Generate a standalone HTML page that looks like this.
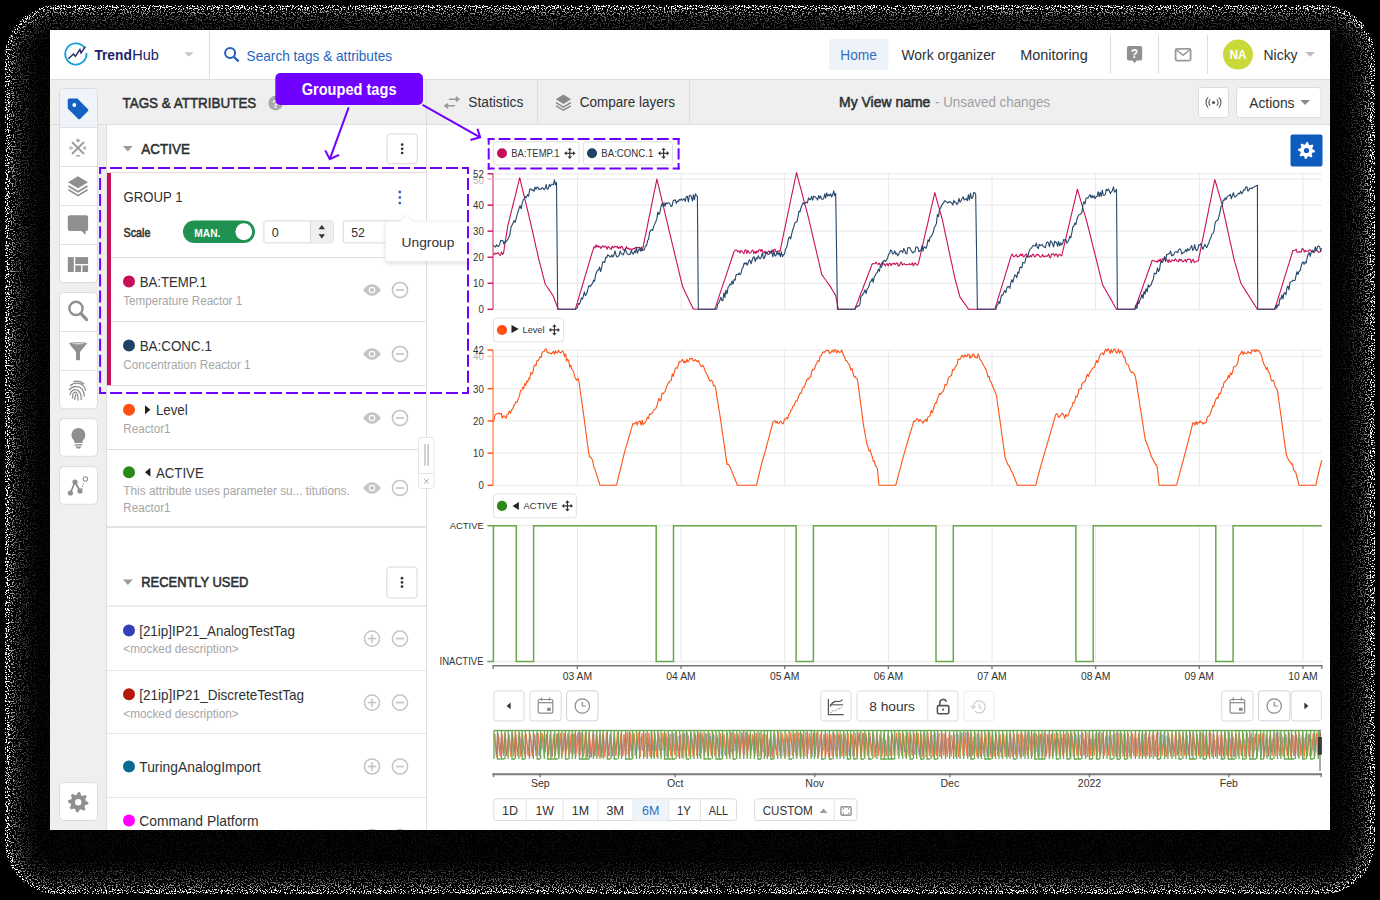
<!DOCTYPE html>
<html><head><meta charset="utf-8"><title>TrendHub</title>
<style>
html,body{margin:0;padding:0;background:#000;width:1380px;height:900px;overflow:hidden}
svg{display:block;font-family:"Liberation Sans", sans-serif}
</style></head><body>
<svg width="1380" height="900" viewBox="0 0 1380 900">
<defs>
<filter id="d30" x="0" y="0" width="1380" height="900" filterUnits="userSpaceOnUse">
 <feTurbulence type="fractalNoise" baseFrequency="0.73" numOctaves="2" seed="5" result="t"/>
 <feColorMatrix in="t" type="matrix" values="0 0 0 0 1  0 0 0 0 1  0 0 0 0 1  20 0 0 0 -11.1" result="dots"/>
 <feComposite in="SourceGraphic" in2="dots" operator="in"/>
</filter>
<filter id="d50" x="0" y="0" width="1380" height="900" filterUnits="userSpaceOnUse">
 <feTurbulence type="fractalNoise" baseFrequency="0.81" numOctaves="2" seed="17" result="t"/>
 <feColorMatrix in="t" type="matrix" values="0 0 0 0 1  0 0 0 0 1  0 0 0 0 1  20 0 0 0 -10.9" result="dots"/>
 <feComposite in="SourceGraphic" in2="dots" operator="in"/>
</filter>
<clipPath id="frameclip"><rect x="50" y="30" width="1280" height="800"/></clipPath>
<clipPath id="cl"><rect x="5" y="5" width="1370" height="889" rx="52"/></clipPath>
</defs>
<g clip-path="url(#cl)"><g filter="url(#d30)"><rect x="5" y="5" width="1370" height="889" rx="52" fill="rgb(14,14,14)"/><rect x="33" y="33" width="1314" height="833" rx="24" fill="none" stroke="rgb(30,30,30)" stroke-width="8"/><rect x="25" y="25" width="1330" height="849" rx="32" fill="none" stroke="rgb(52,52,52)" stroke-width="8"/><rect x="18" y="18" width="1344" height="863" rx="39" fill="none" stroke="rgb(85,85,85)" stroke-width="6"/><rect x="12.5" y="12.5" width="1355.0" height="874.0" rx="44.5" fill="none" stroke="rgb(150,150,150)" stroke-width="5"/></g>
<g filter="url(#d50)"><rect x="7.5" y="7.5" width="1365.0" height="884.0" rx="49.5" fill="none" stroke="#fff" stroke-width="5"/></g></g>
<rect x="50" y="30" width="1280" height="800" rx="0" fill="#ffffff" />
<line x1="50" y1="79.5" x2="1330" y2="79.5" stroke="#dedede" stroke-width="1" />
<line x1="209.5" y1="30" x2="209.5" y2="79" stroke="#dedede" stroke-width="1" />
<rect x="50" y="80" width="1280" height="44.5" rx="0" fill="#efefef" />
<rect x="50" y="80" width="56" height="750" rx="0" fill="#efefef" />
<line x1="50" y1="124.5" x2="1330" y2="124.5" stroke="#dedede" stroke-width="1" />
<path d="M 84.2 47.4 A 10.6 10.6 0 1 0 86.4 52.8" fill="none" stroke="#18a0dc" stroke-width="1.8" />
<path d="M 68.3 58.8 L 73.6 54.1 L 75.3 56.4 L 79.9 49.5 L 81.1 53 L 85.4 46.6" fill="none" stroke="#1f2360" stroke-width="1.4" stroke-linejoin="miter"/>
<text x="94.4" y="59.6" font-size="14.94" fill="#1a2466" font-weight="700" textLength="37.4" lengthAdjust="spacingAndGlyphs" text-anchor="start" >Trend</text>
<text x="132.2" y="59.6" font-size="14.94" fill="#1a2466" textLength="26.6" lengthAdjust="spacingAndGlyphs" text-anchor="start" >Hub</text>
<path d="M 184.3 52.2 L 193.6 52.2 L 189 56.8 Z" fill="#c8c8c8" />
<circle cx="230.1" cy="53.1" r="5.0" fill="none" stroke="#1f5fc0" stroke-width="2" />
<line x1="233.8" y1="56.8" x2="238.6" y2="61.4" stroke="#1f5fc0" stroke-width="2.2" />
<text x="246.6" y="60.5" font-size="14.80" fill="#2765c0" textLength="145.5" lengthAdjust="spacingAndGlyphs" text-anchor="start" >Search tags &amp; attributes</text>
<rect x="829" y="38.7" width="59.4" height="31.2" rx="3" fill="#eef3f9" />
<text x="840.3" y="60.1" font-size="14.39" fill="#2f6fc4" textLength="36.5" lengthAdjust="spacingAndGlyphs" text-anchor="start" >Home</text>
<text x="901.5" y="60.1" font-size="14.39" fill="#2e3133" textLength="94.0" lengthAdjust="spacingAndGlyphs" text-anchor="start" >Work organizer</text>
<text x="1020.2" y="60.1" font-size="14.39" fill="#2e3133" textLength="67.5" lengthAdjust="spacingAndGlyphs" text-anchor="start" >Monitoring</text>
<line x1="1110.5" y1="35" x2="1110.5" y2="73.7" stroke="#dedede" stroke-width="1" />
<line x1="1158.5" y1="35" x2="1158.5" y2="73.7" stroke="#dedede" stroke-width="1" />
<line x1="1207.5" y1="35" x2="1207.5" y2="73.7" stroke="#dedede" stroke-width="1" />
<path d="M 1128.9 46.1 H 1140.2 Q 1142.2 46.1 1142.2 48.1 V 58.6 Q 1142.2 60.6 1140.2 60.6 H 1136.6 L 1134.5 63.3 L 1132.4 60.6 H 1128.9 Q 1126.9 60.6 1126.9 58.6 V 48.1 Q 1126.9 46.1 1128.9 46.1 Z" fill="#909090" />
<text x="1134.5" y="57.6" font-size="12.00" fill="#fff" font-weight="700" text-anchor="middle" >?</text>
<rect x="1175.6" y="48.8" width="15" height="11.8" rx="1.5" fill="none" stroke="#9a9a9a" stroke-width="1.8" />
<path d="M 1176 49.5 L 1183.1 55.2 L 1190.2 49.5" fill="none" stroke="#9a9a9a" stroke-width="1.6" />
<circle cx="1238" cy="54.6" r="15" fill="#c9d93a" />
<text x="1229.5" y="58.9" font-size="12.57" fill="#fff" font-weight="700" textLength="17.0" lengthAdjust="spacingAndGlyphs" text-anchor="start" >NA</text>
<text x="1263.5" y="59.6" font-size="14.53" fill="#2e3133" textLength="34.1" lengthAdjust="spacingAndGlyphs" text-anchor="start" >Nicky</text>
<path d="M 1305.3 52 L 1315 52 L 1310.15 56.7 Z" fill="#bdbdbd" />
<text x="122.5" y="107.7" font-size="14.80" fill="#2e3133" stroke="#2e3133" stroke-width="0.55" stroke-linejoin="round" textLength="133.8" lengthAdjust="spacingAndGlyphs" text-anchor="start" >TAGS &amp; ATTRIBUTES</text>
<circle cx="275.6" cy="103.1" r="7.3" fill="#aaaaaa" />
<text x="275.6" y="107.6" font-size="11.00" fill="#fff" font-weight="700" text-anchor="middle" >?</text>
<line x1="426.5" y1="80" x2="426.5" y2="124" stroke="#dedede" stroke-width="1" />
<line x1="537.5" y1="80" x2="537.5" y2="124" stroke="#dedede" stroke-width="1" />
<line x1="689.5" y1="80" x2="689.5" y2="124" stroke="#dedede" stroke-width="1" />
<path d="M 449 99.2 H 458.5 M 455.8 97 L 458.8 99.2 L 455.8 101.4" fill="none" stroke="#9a9a9a" stroke-width="1.6" />
<path d="M 455 105.8 H 445.3 M 448 103.6 L 445 105.8 L 448 108" fill="none" stroke="#9a9a9a" stroke-width="1.6" />
<text x="468.2" y="107.4" font-size="14.25" fill="#2e3133" textLength="55.2" lengthAdjust="spacingAndGlyphs" text-anchor="start" >Statistics</text>
<path d="M 563.4 94.4 L 571 99.2 L 563.4 104 L 555.8 99.2 Z" fill="#8a8a8a" />
<path d="M 556 102.6 L 563.4 107.2 L 570.8 102.6" fill="none" stroke="#8a8a8a" stroke-width="1.5" />
<path d="M 556 105.8 L 563.4 110.2 L 570.8 105.8" fill="none" stroke="#8a8a8a" stroke-width="1.5" />
<text x="579.8" y="107.4" font-size="14.25" fill="#2e3133" textLength="95.3" lengthAdjust="spacingAndGlyphs" text-anchor="start" >Compare layers</text>
<text x="839.0" y="107.3" font-size="14.39" fill="#2e3133" stroke="#2e3133" stroke-width="0.55" stroke-linejoin="round" textLength="91.4" lengthAdjust="spacingAndGlyphs" text-anchor="start" >My View name</text>
<text x="935.0" y="107.3" font-size="14.39" fill="#a0a0a0" textLength="115.0" lengthAdjust="spacingAndGlyphs" text-anchor="start" >- Unsaved changes</text>
<rect x="1198.5" y="87.5" width="30" height="30" rx="3" fill="#fff" stroke="#dcdcdc" stroke-width="1" />
<circle cx="1213.5" cy="102.5" r="1.6" fill="#555" />
<path d="M 1210.2 99.3 A 4.5 4.5 0 0 0 1210.2 105.7 M 1216.8 99.3 A 4.5 4.5 0 0 1 1216.8 105.7" fill="none" stroke="#555" stroke-width="1.1" />
<path d="M 1208.1 97.4 A 7.3 7.3 0 0 0 1208.1 107.6 M 1218.9 97.4 A 7.3 7.3 0 0 1 1218.9 107.6" fill="none" stroke="#555" stroke-width="1.1" />
<rect x="1236.5" y="87.5" width="84.5" height="30" rx="3" fill="#fff" stroke="#dcdcdc" stroke-width="1" />
<text x="1249.2" y="107.6" font-size="13.97" fill="#2e3133" textLength="45.3" lengthAdjust="spacingAndGlyphs" text-anchor="start" >Actions</text>
<path d="M 1300.3 100 L 1310 100 L 1305.15 105 Z" fill="#8a8a8a" />
<g clip-path="url(#frameclip)">
<rect x="59.5" y="88.5" width="38" height="194" rx="4" fill="#fff" stroke="#dcdcdc" stroke-width="1" />
<path d="M 60 127 V 92.5 Q 60 89 63.5 89 H 93.5 Q 97 89 97 92.5 V 127 Z" fill="#eef4fa" />
<line x1="60" y1="127.5" x2="97" y2="127.5" stroke="#e2e2e2" stroke-width="1" />
<line x1="60" y1="166.5" x2="97" y2="166.5" stroke="#e2e2e2" stroke-width="1" />
<line x1="60" y1="205.5" x2="97" y2="205.5" stroke="#e2e2e2" stroke-width="1" />
<line x1="60" y1="244.5" x2="97" y2="244.5" stroke="#e2e2e2" stroke-width="1" />
<path d="M 67.7 100.3 Q 67.7 98.4 69.6 98.4 L 77.4 98.6 L 88 109.2 Q 88.9 110.1 88 111 L 80.1 118.9 Q 79.2 119.8 78.3 118.9 L 67.8 108.4 Z" fill="#1560c0" />
<circle cx="74.3" cy="105" r="1.9" fill="#fff" />
<line x1="72" y1="142" x2="84" y2="154" stroke="#9a9a9a" stroke-width="1.8" />
<line x1="84" y1="142" x2="72" y2="154" stroke="#9a9a9a" stroke-width="1.8" />
<line x1="78" y1="138.5" x2="78" y2="142.5" stroke="#9a9a9a" stroke-width="1.3" />
<line x1="76" y1="140.5" x2="80" y2="140.5" stroke="#9a9a9a" stroke-width="1.3" />
<line x1="76" y1="155.8" x2="80" y2="155.8" stroke="#9a9a9a" stroke-width="1.3" />
<line x1="69" y1="148" x2="73" y2="148" stroke="#9a9a9a" stroke-width="1.2" />
<circle cx="71" cy="146.2" r="0.55" fill="#9a9a9a" />
<circle cx="71" cy="149.8" r="0.55" fill="#9a9a9a" />
<line x1="83.4" y1="146.5" x2="86" y2="149.5" stroke="#9a9a9a" stroke-width="1.1" />
<line x1="86" y1="146.5" x2="83.4" y2="149.5" stroke="#9a9a9a" stroke-width="1.1" />
<path d="M 78 176.2 L 88 182.2 L 78 188.2 L 68 182.2 Z" fill="#8f8f8f" />
<path d="M 68.5 186 L 78 191.8 L 87.5 186" fill="none" stroke="#8f8f8f" stroke-width="1.6" />
<path d="M 68.5 189.8 L 78 195.6 L 87.5 189.8" fill="none" stroke="#8f8f8f" stroke-width="1.6" />
<path d="M 69.8 215.2 H 86.1 Q 88.1 215.2 88.1 217.2 V 229.1 Q 88.1 231.1 86.1 231.1 H 85.6 V 235 L 81.6 231.1 H 69.8 Q 67.8 231.1 67.8 229.1 V 217.2 Q 67.8 215.2 69.8 215.2 Z" fill="#8f8f8f" />
<rect x="67.8" y="257.1" width="6" height="14.9" rx="0" fill="#8f8f8f" />
<rect x="75.2" y="257.1" width="12.9" height="6.9" rx="0" fill="#8f8f8f" />
<rect x="75.2" y="265.4" width="5.8" height="6.6" rx="0" fill="#8f8f8f" />
<rect x="82.4" y="265.4" width="5.7" height="6.6" rx="0" fill="#8f8f8f" />
<rect x="59.5" y="292.5" width="38" height="116.30000000000001" rx="4" fill="#fff" stroke="#dcdcdc" stroke-width="1" />
<line x1="60" y1="331.5" x2="97" y2="331.5" stroke="#e2e2e2" stroke-width="1" />
<line x1="60" y1="370.5" x2="97" y2="370.5" stroke="#e2e2e2" stroke-width="1" />
<circle cx="76.0" cy="308.4" r="6.6" fill="none" stroke="#8f8f8f" stroke-width="2.4" />
<line x1="80.8" y1="313.4" x2="86.6" y2="319.6" stroke="#8f8f8f" stroke-width="3.2" stroke-linecap="round"/>
<path d="M 69 343.5 Q 69 342.2 78 342.2 Q 87 342.2 87 343.5 L 80 352 V 359.5 Q 80 360.2 79.3 360.2 H 76.7 Q 76 360.2 76 359.5 V 352 Z" fill="#8f8f8f" />
<path d="M 71 343.6 Q 78 345.4 85 343.6 Q 78 342.4 71 343.6 Z" fill="#dcdcdc" />
<path d="M 74.7 399.4 Q 75.2 396.5 75.7 394.6" fill="none" stroke="#8f8f8f" stroke-width="1.3" stroke-linecap="round"/>
<path d="M 72.5 398 Q 72.6 392.2 75.3 392.2 Q 78 392.4 78 400" fill="none" stroke="#8f8f8f" stroke-width="1.3" stroke-linecap="round"/>
<path d="M 70 394.6 Q 71.5 389.5 75.5 389.6 Q 81 389.8 81.3 399.6" fill="none" stroke="#8f8f8f" stroke-width="1.3" stroke-linecap="round"/>
<path d="M 69.3 389.5 Q 73 386 77 386.6 Q 84 387.5 84.3 396" fill="none" stroke="#8f8f8f" stroke-width="1.3" stroke-linecap="round"/>
<path d="M 70.4 385.4 Q 74 382.8 78 383.2 Q 84 384 85.7 390.3" fill="none" stroke="#8f8f8f" stroke-width="1.3" stroke-linecap="round"/>
<path d="M 74.1 381.5 Q 79 380.4 83.7 383.6" fill="none" stroke="#8f8f8f" stroke-width="1.3" stroke-linecap="round"/>
<rect x="59.5" y="418.7" width="38" height="37.60000000000002" rx="4" fill="#fff" stroke="#dcdcdc" stroke-width="1" />
<path d="M 78.4 428 A 7 7 0 0 1 85.4 435 Q 85.4 438.5 82.5 441 V 443 H 74.3 V 441 Q 71.4 438.5 71.4 435 A 7 7 0 0 1 78.4 428 Z" fill="#8f8f8f" />
<rect x="74.6" y="444.2" width="7.6" height="1.4" rx="0" fill="#8f8f8f" />
<path d="M 75.4 446.6 H 81.4 L 80 448.4 H 76.8 Z" fill="#8f8f8f" />
<rect x="59.5" y="466.7" width="38" height="37.60000000000002" rx="4" fill="#fff" stroke="#dcdcdc" stroke-width="1" />
<line x1="75" y1="482" x2="70.4" y2="493" stroke="#8f8f8f" stroke-width="1.8" />
<line x1="75" y1="482" x2="80" y2="491" stroke="#8f8f8f" stroke-width="1.8" />
<circle cx="75" cy="482" r="2.6" fill="#8f8f8f" />
<circle cx="70.4" cy="493" r="2.6" fill="#8f8f8f" />
<circle cx="80" cy="491" r="2.6" fill="#8f8f8f" />
<circle cx="85.4" cy="479" r="2.2" fill="#fff" stroke="#8f8f8f" stroke-width="1.1" />
<path d="M 81.6 489 L 84 482" fill="none" stroke="#8f8f8f" stroke-width="1.1" stroke-dasharray="1.2 1.2"/>
<rect x="59.5" y="782.6" width="38" height="37.89999999999998" rx="4" fill="#fff" stroke="#dcdcdc" stroke-width="1" />
<path d="M 88.40 802.20 L 88.20 804.19 L 85.22 805.11 L 84.52 806.42 L 85.41 809.41 L 83.87 810.68 L 81.11 809.22 L 79.68 809.65 L 78.20 812.40 L 76.21 812.20 L 75.29 809.22 L 73.98 808.52 L 70.99 809.41 L 69.72 807.87 L 71.18 805.11 L 70.75 803.68 L 68.00 802.20 L 68.20 800.21 L 71.18 799.29 L 71.88 797.98 L 70.99 794.99 L 72.53 793.72 L 75.29 795.18 L 76.72 794.75 L 78.20 792.00 L 80.19 792.20 L 81.11 795.18 L 82.42 795.88 L 85.41 794.99 L 86.68 796.53 L 85.22 799.29 L 85.65 800.72 Z" fill="#8f8f8f" />
<circle cx="78.2" cy="802.2" r="3.2" fill="#fff" />
<rect x="106" y="125" width="320.5" height="705" rx="0" fill="#fff" />
<line x1="106.5" y1="125" x2="106.5" y2="830" stroke="#dedede" stroke-width="1" />
<line x1="426.5" y1="125" x2="426.5" y2="830" stroke="#dedede" stroke-width="1" />
<path d="M 123 146 L 132.7 146 L 127.85 151.5 Z" fill="#9a9a9a" />
<text x="141.2" y="153.9" font-size="14.11" fill="#2e3133" stroke="#2e3133" stroke-width="0.55" stroke-linejoin="round" textLength="48.7" lengthAdjust="spacingAndGlyphs" text-anchor="start" >ACTIVE</text>
<rect x="387.1" y="133.9" width="30.099999999999966" height="29.900000000000006" rx="3" fill="#fff" stroke="#d8d8d8" stroke-width="1" />
<circle cx="402.15" cy="144.6" r="1.35" fill="#333" />
<circle cx="402.15" cy="148.8" r="1.35" fill="#333" />
<circle cx="402.15" cy="153" r="1.35" fill="#333" />
<line x1="107" y1="172.5" x2="426" y2="172.5" stroke="#dedede" stroke-width="1" />
<rect x="107" y="173" width="4" height="212.3" rx="0" fill="#c8105a" />
<text x="123.6" y="201.7" font-size="13.97" fill="#2e3133" textLength="58.9" lengthAdjust="spacingAndGlyphs" text-anchor="start" >GROUP 1</text>
<circle cx="399.8" cy="191.9" r="1.35" fill="#1f5fc0" />
<circle cx="399.8" cy="197.5" r="1.35" fill="#1f5fc0" />
<circle cx="399.8" cy="203.1" r="1.35" fill="#1f5fc0" />
<text x="123.6" y="236.9" font-size="12.71" fill="#2e3133" stroke="#2e3133" stroke-width="0.55" stroke-linejoin="round" textLength="26.8" lengthAdjust="spacingAndGlyphs" text-anchor="start" >Scale</text>
<rect x="183" y="220.4" width="72" height="22.7" rx="11.35" fill="#1f9150" />
<text x="194.3" y="236.6" font-size="10.75" fill="#fff" font-weight="700" textLength="26.1" lengthAdjust="spacingAndGlyphs" text-anchor="start" >MAN.</text>
<circle cx="243.8" cy="231.75" r="8.4" fill="#fff" />
<rect x="263.9" y="220.9" width="69.40000000000003" height="22.0" rx="2" fill="#fff" stroke="#d8d8d8" stroke-width="1" />
<rect x="310.4" y="221" width="22.9" height="21.9" rx="0" fill="#efefef" />
<line x1="310.4" y1="221" x2="310.4" y2="243" stroke="#dedede" stroke-width="1" />
<path d="M 318.6 229.2 L 325 229.2 L 321.8 225 Z" fill="#333" />
<path d="M 318.6 234.3 L 325 234.3 L 321.8 238.5 Z" fill="#333" />
<text x="271.8" y="236.7" font-size="12.15" fill="#2e3133" textLength="7.0" lengthAdjust="spacingAndGlyphs" text-anchor="start" >0</text>
<rect x="343.2" y="220.9" width="69.30000000000001" height="22.0" rx="2" fill="#fff" stroke="#d8d8d8" stroke-width="1" />
<text x="351.3" y="236.7" font-size="12.15" fill="#2e3133" textLength="13.6" lengthAdjust="spacingAndGlyphs" text-anchor="start" >52</text>
<line x1="111" y1="257.5" x2="426" y2="257.5" stroke="#dedede" stroke-width="1" />
<circle cx="129" cy="281.4" r="6" fill="#c8105a" />
<text x="139.7" y="286.7" font-size="14.80" fill="#2e3133" textLength="67.1" lengthAdjust="spacingAndGlyphs" text-anchor="start" >BA:TEMP.1</text>
<text x="123.3" y="304.6" font-size="12.01" fill="#a6a6a6" textLength="118.9" lengthAdjust="spacingAndGlyphs" text-anchor="start" >Temperature Reactor 1</text>
<path d="M 363 290 Q 372 278.5 381 290 Q 372 301.5 363 290 Z" fill="#c4c4c4" />
<circle cx="372" cy="290" r="3.3" fill="#fff" />
<circle cx="372" cy="290" r="2.1" fill="#c4c4c4" />
<circle cx="400" cy="290" r="7.6" fill="none" stroke="#c4c4c4" stroke-width="1.5" />
<line x1="395.8" y1="290" x2="404.2" y2="290" stroke="#c4c4c4" stroke-width="1.6" />
<line x1="111" y1="321.5" x2="426" y2="321.5" stroke="#dedede" stroke-width="1" />
<circle cx="129" cy="345.5" r="6" fill="#1f4266" />
<text x="139.7" y="350.8" font-size="14.80" fill="#2e3133" textLength="72.2" lengthAdjust="spacingAndGlyphs" text-anchor="start" >BA:CONC.1</text>
<text x="123.3" y="368.7" font-size="12.01" fill="#a6a6a6" textLength="127.3" lengthAdjust="spacingAndGlyphs" text-anchor="start" >Concentration Reactor 1</text>
<path d="M 363 354 Q 372 342.5 381 354 Q 372 365.5 363 354 Z" fill="#c4c4c4" />
<circle cx="372" cy="354" r="3.3" fill="#fff" />
<circle cx="372" cy="354" r="2.1" fill="#c4c4c4" />
<circle cx="400" cy="354" r="7.6" fill="none" stroke="#c4c4c4" stroke-width="1.5" />
<line x1="395.8" y1="354" x2="404.2" y2="354" stroke="#c4c4c4" stroke-width="1.6" />
<line x1="111" y1="385.5" x2="426" y2="385.5" stroke="#dedede" stroke-width="1" />
<circle cx="129" cy="409.8" r="6" fill="#ff4f14" />
<path d="M 145 405.3 L 150.4 409.8 L 145 414.3 Z" fill="#222" />
<text x="155.9" y="415.1" font-size="14.80" fill="#2e3133" textLength="31.7" lengthAdjust="spacingAndGlyphs" text-anchor="start" >Level</text>
<text x="123.3" y="432.9" font-size="12.01" fill="#a6a6a6" textLength="47.2" lengthAdjust="spacingAndGlyphs" text-anchor="start" >Reactor1</text>
<path d="M 363 418 Q 372 406.5 381 418 Q 372 429.5 363 418 Z" fill="#c4c4c4" />
<circle cx="372" cy="418" r="3.3" fill="#fff" />
<circle cx="372" cy="418" r="2.1" fill="#c4c4c4" />
<circle cx="400" cy="418" r="7.6" fill="none" stroke="#c4c4c4" stroke-width="1.5" />
<line x1="395.8" y1="418" x2="404.2" y2="418" stroke="#c4c4c4" stroke-width="1.6" />
<line x1="107" y1="449.5" x2="426" y2="449.5" stroke="#dedede" stroke-width="1" />
<circle cx="129" cy="472.2" r="6" fill="#2a8a17" />
<path d="M 150.4 467.7 L 145 472.2 L 150.4 476.7 Z" fill="#222" />
<text x="156.0" y="477.5" font-size="14.80" fill="#2e3133" textLength="47.7" lengthAdjust="spacingAndGlyphs" text-anchor="start" >ACTIVE</text>
<text x="123.3" y="495.3" font-size="12.01" fill="#a6a6a6" textLength="226.5" lengthAdjust="spacingAndGlyphs" text-anchor="start" >This attribute uses parameter su... titutions.</text>
<text x="123.3" y="511.5" font-size="12.01" fill="#a6a6a6" textLength="47.2" lengthAdjust="spacingAndGlyphs" text-anchor="start" >Reactor1</text>
<path d="M 363 488 Q 372 476.5 381 488 Q 372 499.5 363 488 Z" fill="#c4c4c4" />
<circle cx="372" cy="488" r="3.3" fill="#fff" />
<circle cx="372" cy="488" r="2.1" fill="#c4c4c4" />
<circle cx="400" cy="488" r="7.6" fill="none" stroke="#c4c4c4" stroke-width="1.5" />
<line x1="395.8" y1="488" x2="404.2" y2="488" stroke="#c4c4c4" stroke-width="1.6" />
<rect x="107" y="526" width="319" height="2" rx="0" fill="#e4e4e4" />
<path d="M 123 579.6 L 132.8 579.6 L 127.9 585 Z" fill="#9a9a9a" />
<text x="141.3" y="587.3" font-size="13.97" fill="#2e3133" stroke="#2e3133" stroke-width="0.55" stroke-linejoin="round" textLength="107.1" lengthAdjust="spacingAndGlyphs" text-anchor="start" >RECENTLY USED</text>
<rect x="386.8" y="567.0" width="30.30000000000001" height="31.0" rx="3" fill="#fff" stroke="#d8d8d8" stroke-width="1" />
<circle cx="402" cy="578.2" r="1.35" fill="#333" />
<circle cx="402" cy="582.4" r="1.35" fill="#333" />
<circle cx="402" cy="586.6" r="1.35" fill="#333" />
<rect x="107" y="605.2" width="319" height="1.6" rx="0" fill="#e6e6e6" />
<circle cx="129" cy="630.4" r="6" fill="#3640b6" />
<text x="139.2" y="635.7" font-size="14.80" fill="#2e3133" textLength="155.8" lengthAdjust="spacingAndGlyphs" text-anchor="start" >[21ip]IP21_AnalogTestTag</text>
<text x="123.3" y="653.0" font-size="12.01" fill="#a6a6a6" textLength="115.4" lengthAdjust="spacingAndGlyphs" text-anchor="start" >&lt;mocked description&gt;</text>
<circle cx="372" cy="638.6" r="7.6" fill="none" stroke="#c4c4c4" stroke-width="1.5" />
<line x1="367.8" y1="638.6" x2="376.2" y2="638.6" stroke="#c4c4c4" stroke-width="1.6" />
<line x1="372" y1="634.4" x2="372" y2="642.8000000000001" stroke="#c4c4c4" stroke-width="1.6" />
<circle cx="400" cy="638.6" r="7.6" fill="none" stroke="#c4c4c4" stroke-width="1.5" />
<line x1="395.8" y1="638.6" x2="404.2" y2="638.6" stroke="#c4c4c4" stroke-width="1.6" />
<line x1="107" y1="670.5" x2="426" y2="670.5" stroke="#e6e6e6" stroke-width="1" />
<circle cx="129" cy="694.3" r="6" fill="#b5180b" />
<text x="139.2" y="699.6" font-size="14.80" fill="#2e3133" textLength="164.8" lengthAdjust="spacingAndGlyphs" text-anchor="start" >[21ip]IP21_DiscreteTestTag</text>
<text x="123.3" y="717.5" font-size="12.01" fill="#a6a6a6" textLength="115.4" lengthAdjust="spacingAndGlyphs" text-anchor="start" >&lt;mocked description&gt;</text>
<circle cx="372" cy="702.6" r="7.6" fill="none" stroke="#c4c4c4" stroke-width="1.5" />
<line x1="367.8" y1="702.6" x2="376.2" y2="702.6" stroke="#c4c4c4" stroke-width="1.6" />
<line x1="372" y1="698.4" x2="372" y2="706.8000000000001" stroke="#c4c4c4" stroke-width="1.6" />
<circle cx="400" cy="702.6" r="7.6" fill="none" stroke="#c4c4c4" stroke-width="1.5" />
<line x1="395.8" y1="702.6" x2="404.2" y2="702.6" stroke="#c4c4c4" stroke-width="1.6" />
<line x1="107" y1="733.5" x2="426" y2="733.5" stroke="#e6e6e6" stroke-width="1" />
<circle cx="129" cy="766.5" r="6" fill="#0b6a94" />
<text x="139.2" y="771.8" font-size="14.80" fill="#2e3133" textLength="121.3" lengthAdjust="spacingAndGlyphs" text-anchor="start" >TuringAnalogImport</text>
<circle cx="372" cy="766.5" r="7.6" fill="none" stroke="#c4c4c4" stroke-width="1.5" />
<line x1="367.8" y1="766.5" x2="376.2" y2="766.5" stroke="#c4c4c4" stroke-width="1.6" />
<line x1="372" y1="762.3" x2="372" y2="770.7" stroke="#c4c4c4" stroke-width="1.6" />
<circle cx="400" cy="766.5" r="7.6" fill="none" stroke="#c4c4c4" stroke-width="1.5" />
<line x1="395.8" y1="766.5" x2="404.2" y2="766.5" stroke="#c4c4c4" stroke-width="1.6" />
<line x1="107" y1="797.5" x2="426" y2="797.5" stroke="#e6e6e6" stroke-width="1" />
<circle cx="129" cy="820.6" r="6" fill="#ff00ff" />
<text x="139.2" y="825.9" font-size="14.80" fill="#2e3133" textLength="119.3" lengthAdjust="spacingAndGlyphs" text-anchor="start" >Command Platform</text>
<circle cx="372" cy="837.2" r="7.6" fill="none" stroke="#c4c4c4" stroke-width="1.5" />
<line x1="367.8" y1="837.2" x2="376.2" y2="837.2" stroke="#c4c4c4" stroke-width="1.6" />
<line x1="372" y1="833.0" x2="372" y2="841.4000000000001" stroke="#c4c4c4" stroke-width="1.6" />
<circle cx="400" cy="837.2" r="7.6" fill="none" stroke="#c4c4c4" stroke-width="1.5" />
<line x1="395.8" y1="837.2" x2="404.2" y2="837.2" stroke="#c4c4c4" stroke-width="1.6" />
<rect x="418.5" y="437.3" width="15.5" height="51.2" rx="3" fill="#fff" stroke="#e4e4e4" stroke-width="1" />
<rect x="424.2" y="444.2" width="1.6" height="21.6" rx="0" fill="#c8c8c8" />
<rect x="427.3" y="444.2" width="1.7" height="21.6" rx="0" fill="#c8c8c8" />
<line x1="419" y1="473.5" x2="433.5" y2="473.5" stroke="#e4e4e4" stroke-width="1" />
<line x1="424.2" y1="479" x2="428.8" y2="483.5" stroke="#999" stroke-width="0.9" />
<line x1="428.8" y1="479" x2="424.2" y2="483.5" stroke="#999" stroke-width="0.9" />
<line x1="493" y1="309.3" x2="1322" y2="309.3" stroke="#e8e8e8" stroke-width="1" />
<line x1="493" y1="283.25" x2="1322" y2="283.25" stroke="#e8e8e8" stroke-width="1" />
<line x1="493" y1="257.2" x2="1322" y2="257.2" stroke="#e8e8e8" stroke-width="1" />
<line x1="493" y1="231.15" x2="1322" y2="231.15" stroke="#e8e8e8" stroke-width="1" />
<line x1="493" y1="205.10000000000002" x2="1322" y2="205.10000000000002" stroke="#e8e8e8" stroke-width="1" />
<line x1="493" y1="179.05" x2="1322" y2="179.05" stroke="#e8e8e8" stroke-width="1" />
<line x1="493" y1="173.8" x2="1322" y2="173.8" stroke="#e8e8e8" stroke-width="1" />
<line x1="577.4" y1="173.8" x2="577.4" y2="309.3" stroke="#e8e8e8" stroke-width="1" />
<line x1="681.05" y1="173.8" x2="681.05" y2="309.3" stroke="#e8e8e8" stroke-width="1" />
<line x1="784.7" y1="173.8" x2="784.7" y2="309.3" stroke="#e8e8e8" stroke-width="1" />
<line x1="888.35" y1="173.8" x2="888.35" y2="309.3" stroke="#e8e8e8" stroke-width="1" />
<line x1="992.0" y1="173.8" x2="992.0" y2="309.3" stroke="#e8e8e8" stroke-width="1" />
<line x1="1095.65" y1="173.8" x2="1095.65" y2="309.3" stroke="#e8e8e8" stroke-width="1" />
<line x1="1199.3000000000002" y1="173.8" x2="1199.3000000000002" y2="309.3" stroke="#e8e8e8" stroke-width="1" />
<line x1="1302.95" y1="173.8" x2="1302.95" y2="309.3" stroke="#e8e8e8" stroke-width="1" />
<line x1="493" y1="173.8" x2="493" y2="309.3" stroke="#e0709a" stroke-width="1.6" />
<line x1="487.5" y1="309.3" x2="493" y2="309.3" stroke="#c8105a" stroke-width="1.4" />
<line x1="487.5" y1="283.25" x2="493" y2="283.25" stroke="#c8105a" stroke-width="1.4" />
<line x1="487.5" y1="257.2" x2="493" y2="257.2" stroke="#c8105a" stroke-width="1.4" />
<line x1="487.5" y1="231.15" x2="493" y2="231.15" stroke="#c8105a" stroke-width="1.4" />
<line x1="487.5" y1="205.10000000000002" x2="493" y2="205.10000000000002" stroke="#c8105a" stroke-width="1.4" />
<line x1="487.5" y1="173.8" x2="493" y2="173.8" stroke="#c8105a" stroke-width="1.4" />
<line x1="487.5" y1="179.05" x2="493" y2="179.05" stroke="#f0b8cc" stroke-width="1.4" />
<text x="483.8" y="313.2" font-size="10.80" fill="#333" textLength="5.4" lengthAdjust="spacingAndGlyphs" text-anchor="end" >0</text>
<text x="483.8" y="287.1" font-size="10.80" fill="#333" textLength="10.8" lengthAdjust="spacingAndGlyphs" text-anchor="end" >10</text>
<text x="483.8" y="261.1" font-size="10.80" fill="#333" textLength="10.8" lengthAdjust="spacingAndGlyphs" text-anchor="end" >20</text>
<text x="483.8" y="235.1" font-size="10.80" fill="#333" textLength="10.8" lengthAdjust="spacingAndGlyphs" text-anchor="end" >30</text>
<text x="483.8" y="209.0" font-size="10.80" fill="#333" textLength="10.8" lengthAdjust="spacingAndGlyphs" text-anchor="end" >40</text>
<text x="483.8" y="183.8" font-size="10.80" fill="#b5b5b5" textLength="10.8" lengthAdjust="spacingAndGlyphs" text-anchor="end" >50</text>
<text x="483.8" y="177.8" font-size="10.80" fill="#333" textLength="10.8" lengthAdjust="spacingAndGlyphs" text-anchor="end" >52</text>
<path d="M 493.5 253.3 L 494.5 254.4 L 495.5 253.1 L 496.5 253.8 L 497.5 252.9 L 498.5 252.8 L 499.5 255.1 L 500.5 255.3 L 501.5 251.9 L 502.5 254.3 L 503.5 253.3 L 504.6 246.5 L 505.6 239.6 L 506.7 232.8 L 507.8 225.9 L 508.9 221.6 L 510.0 217.2 L 511.0 212.8 L 512.1 208.4 L 513.2 204.0 L 514.3 199.7 L 515.4 195.3 L 516.5 190.9 L 517.5 186.5 L 518.6 182.1 L 519.7 177.7 L 520.8 182.2 L 521.8 186.6 L 522.9 191.0 L 524.0 195.5 L 525.0 199.9 L 526.1 204.3 L 527.2 208.7 L 528.3 213.2 L 529.3 217.6 L 530.4 222.0 L 531.5 227.1 L 532.7 232.1 L 533.8 237.1 L 534.9 242.1 L 536.0 247.2 L 537.2 252.2 L 538.3 257.2 L 539.4 261.7 L 540.6 266.1 L 541.8 270.6 L 542.9 275.1 L 544.1 279.6 L 545.2 284.0 L 546.3 285.7 L 547.4 287.3 L 548.5 288.9 L 549.7 290.6 L 550.8 292.2 L 551.9 293.9 L 553.0 295.5 L 554.1 298.3 L 555.1 301.0 L 556.2 303.8 L 557.2 306.5 L 558.3 309.3 L 559.3 309.3 L 560.3 309.3 L 561.3 309.3 L 562.3 309.3 L 563.3 309.3 L 564.3 309.3 L 565.3 309.3 L 566.3 309.3 L 567.3 309.3 L 568.3 309.3 L 569.3 309.3 L 570.3 309.3 L 571.3 309.3 L 572.3 309.3 L 573.3 309.3 L 574.3 309.3 L 575.3 309.3 L 576.3 305.8 L 577.4 302.4 L 578.4 298.9 L 579.4 295.4 L 580.5 291.9 L 581.5 288.5 L 582.5 285.0 L 583.6 281.5 L 584.6 278.0 L 585.6 274.6 L 586.7 271.1 L 587.7 267.6 L 588.7 264.1 L 589.8 260.7 L 590.8 257.2 L 591.8 253.7 L 592.9 250.3 L 593.9 246.8 L 594.9 247.9 L 595.9 244.8 L 596.9 247.1 L 598.0 245.6 L 599.0 247.1 L 600.0 246.5 L 601.0 248.6 L 602.0 246.7 L 603.0 245.7 L 604.0 247.2 L 605.1 246.4 L 606.1 246.7 L 607.1 249.3 L 608.1 246.5 L 609.1 247.2 L 610.1 248.5 L 611.1 249.7 L 612.2 246.2 L 613.2 247.9 L 614.2 247.0 L 615.2 246.3 L 616.2 247.1 L 617.2 246.3 L 618.2 248.5 L 619.3 246.9 L 620.3 248.4 L 621.3 246.4 L 622.3 246.7 L 623.3 250.0 L 624.3 249.9 L 625.4 249.6 L 626.4 246.6 L 627.4 248.8 L 628.4 248.1 L 629.4 249.5 L 630.4 248.7 L 631.4 249.3 L 632.5 249.5 L 633.5 248.5 L 634.5 248.6 L 635.5 247.3 L 636.5 248.3 L 637.5 247.3 L 638.5 247.7 L 639.6 247.2 L 640.6 248.6 L 641.6 250.7 L 642.6 249.4 L 643.6 244.4 L 644.6 239.3 L 645.7 234.3 L 646.7 229.3 L 647.7 224.3 L 648.7 219.2 L 649.8 214.2 L 650.8 209.2 L 651.8 204.2 L 652.8 199.1 L 653.8 194.1 L 654.9 189.1 L 655.9 184.1 L 656.9 179.1 L 657.9 183.4 L 659.0 187.7 L 660.0 192.1 L 661.0 196.4 L 662.0 200.7 L 663.1 205.1 L 664.1 209.4 L 665.1 213.7 L 666.2 218.1 L 667.2 222.4 L 668.2 226.7 L 669.2 231.1 L 670.3 235.4 L 671.3 239.7 L 672.3 244.0 L 673.4 248.3 L 674.4 252.5 L 675.4 256.8 L 676.4 261.1 L 677.5 265.3 L 678.5 269.6 L 679.5 273.8 L 680.5 278.1 L 681.6 282.4 L 682.6 286.6 L 683.6 288.8 L 684.7 291.0 L 685.7 293.2 L 686.8 295.4 L 687.8 297.6 L 688.8 299.8 L 689.9 302.0 L 690.9 304.1 L 692.0 306.3 L 693.0 308.5 L 694.0 308.9 L 695.0 309.3 L 696.0 309.3 L 697.1 309.3 L 698.1 309.3 L 699.2 309.3 L 700.2 309.3 L 701.3 309.3 L 702.3 309.3 L 703.3 309.3 L 704.4 309.3 L 705.4 309.3 L 706.5 309.3 L 707.5 309.3 L 708.5 309.3 L 709.6 309.3 L 710.6 309.3 L 711.7 309.3 L 712.7 309.3 L 713.8 309.3 L 714.8 309.3 L 715.8 306.3 L 716.8 303.3 L 717.8 300.3 L 718.8 297.2 L 719.8 294.2 L 720.8 291.2 L 721.8 288.2 L 722.8 285.2 L 723.8 282.2 L 724.9 279.1 L 725.9 276.1 L 726.9 273.1 L 727.9 270.1 L 728.9 267.1 L 729.9 264.1 L 730.9 261.0 L 731.9 258.0 L 732.9 255.0 L 733.9 252.0 L 734.9 250.5 L 735.9 250.0 L 736.9 250.3 L 737.9 251.6 L 738.9 251.0 L 739.9 253.1 L 740.9 250.5 L 741.9 251.5 L 742.9 252.7 L 743.9 253.6 L 744.9 250.3 L 745.9 249.7 L 746.9 253.5 L 747.9 250.5 L 748.9 252.1 L 749.9 253.2 L 750.9 252.6 L 751.9 250.6 L 752.9 250.1 L 753.9 253.6 L 754.9 251.2 L 755.9 253.5 L 757.0 250.7 L 758.0 252.3 L 759.0 250.0 L 760.0 249.5 L 761.0 251.5 L 762.0 249.4 L 763.0 252.3 L 764.0 253.2 L 765.0 251.0 L 766.0 253.4 L 767.0 252.7 L 768.0 251.8 L 769.0 250.9 L 770.0 252.8 L 771.0 253.3 L 772.0 249.8 L 773.0 252.1 L 774.0 249.4 L 775.0 249.6 L 776.0 251.8 L 777.0 251.4 L 778.0 251.2 L 779.0 250.6 L 780.0 251.2 L 781.0 246.3 L 782.1 241.4 L 783.1 236.5 L 784.1 231.5 L 785.2 226.6 L 786.2 221.7 L 787.2 216.8 L 788.2 211.9 L 789.3 207.0 L 790.3 202.0 L 791.3 197.1 L 792.4 192.2 L 793.4 187.3 L 794.4 182.4 L 795.5 177.5 L 796.5 172.5 L 797.5 176.4 L 798.5 180.2 L 799.5 184.1 L 800.6 187.9 L 801.6 191.7 L 802.6 195.6 L 803.6 199.4 L 804.6 203.3 L 805.7 207.1 L 806.7 211.0 L 807.7 214.8 L 808.7 218.6 L 809.7 222.9 L 810.7 227.2 L 811.7 231.5 L 812.7 235.8 L 813.7 240.1 L 814.7 244.4 L 815.7 248.7 L 816.7 253.0 L 817.7 257.2 L 818.7 261.5 L 819.7 265.8 L 820.7 270.1 L 821.7 274.4 L 822.8 275.9 L 823.9 277.5 L 825.0 279.0 L 826.0 280.5 L 827.1 282.0 L 828.2 283.6 L 829.3 285.1 L 830.4 286.6 L 831.5 288.4 L 832.5 290.2 L 833.6 292.0 L 834.6 293.7 L 835.7 295.5 L 837.0 302.4 L 838.3 309.3 L 839.3 309.3 L 840.4 309.3 L 841.4 309.3 L 842.4 309.3 L 843.5 309.3 L 844.5 309.3 L 845.5 309.3 L 846.5 309.3 L 847.6 309.3 L 848.6 309.3 L 849.6 309.3 L 850.7 309.3 L 851.7 309.3 L 852.7 309.3 L 853.8 309.3 L 854.8 309.3 L 855.8 306.6 L 856.8 304.0 L 857.9 301.3 L 858.9 298.6 L 859.9 296.0 L 860.9 293.3 L 862.0 290.6 L 863.0 288.0 L 864.0 285.3 L 865.0 282.6 L 866.1 280.0 L 867.1 277.3 L 868.1 274.6 L 869.1 272.0 L 870.2 269.3 L 871.2 266.6 L 872.2 264.0 L 873.2 263.6 L 874.2 263.7 L 875.2 263.5 L 876.2 262.1 L 877.2 263.9 L 878.2 264.3 L 879.2 263.1 L 880.2 265.1 L 881.2 264.8 L 882.2 262.0 L 883.2 263.9 L 884.2 263.8 L 885.2 266.0 L 886.2 264.3 L 887.2 263.6 L 888.2 266.0 L 889.2 263.5 L 890.2 263.4 L 891.2 265.8 L 892.2 263.4 L 893.2 264.1 L 894.2 263.2 L 895.2 264.6 L 896.3 263.1 L 897.3 263.0 L 898.3 266.0 L 899.3 265.8 L 900.3 263.2 L 901.3 262.0 L 902.3 265.0 L 903.3 264.2 L 904.3 263.6 L 905.3 264.7 L 906.3 264.5 L 907.3 264.8 L 908.3 264.5 L 909.3 263.6 L 910.3 264.8 L 911.3 264.5 L 912.3 262.8 L 913.3 265.9 L 914.3 263.7 L 915.3 263.0 L 916.3 264.8 L 917.3 265.1 L 918.3 264.0 L 919.3 259.5 L 920.4 255.1 L 921.4 250.6 L 922.4 246.1 L 923.5 241.7 L 924.5 237.2 L 925.5 232.7 L 926.5 228.3 L 927.6 223.8 L 928.6 219.4 L 929.6 214.9 L 930.7 210.4 L 931.7 206.0 L 932.7 201.5 L 933.8 197.1 L 934.8 192.6 L 935.9 196.6 L 937.0 200.6 L 938.1 204.7 L 939.3 208.7 L 940.4 212.7 L 941.5 216.7 L 942.6 220.7 L 943.6 225.5 L 944.6 230.3 L 945.6 235.1 L 946.7 239.8 L 947.7 244.6 L 948.7 249.4 L 949.7 254.2 L 950.7 258.9 L 951.8 263.7 L 952.8 268.5 L 953.8 273.3 L 954.8 278.0 L 955.8 281.8 L 956.9 285.6 L 957.9 289.4 L 959.0 293.3 L 960.0 297.1 L 961.1 298.6 L 962.2 300.1 L 963.3 301.6 L 964.4 303.2 L 965.4 304.7 L 966.5 306.2 L 967.6 307.8 L 968.7 309.3 L 969.7 309.3 L 970.7 309.3 L 971.7 309.3 L 972.7 309.3 L 973.7 309.3 L 974.7 309.3 L 975.7 309.3 L 976.7 309.3 L 977.7 309.3 L 978.7 309.3 L 979.7 309.3 L 980.7 309.3 L 981.8 309.3 L 982.8 309.3 L 983.8 309.3 L 984.8 309.3 L 985.8 309.3 L 986.8 309.3 L 987.8 309.3 L 988.8 309.3 L 989.8 309.3 L 990.8 309.3 L 991.8 309.3 L 992.8 309.3 L 993.8 309.3 L 994.8 309.3 L 995.8 305.9 L 996.9 302.6 L 997.9 299.2 L 998.9 295.8 L 1000.0 292.4 L 1001.0 289.1 L 1002.0 285.7 L 1003.0 282.3 L 1004.1 279.0 L 1005.1 275.6 L 1006.1 272.2 L 1007.2 268.9 L 1008.2 265.5 L 1009.2 262.1 L 1010.3 258.7 L 1011.3 255.4 L 1012.3 254.1 L 1013.3 256.5 L 1014.3 256.7 L 1015.3 255.7 L 1016.3 254.6 L 1017.3 257.1 L 1018.4 256.2 L 1019.4 256.2 L 1020.4 254.1 L 1021.4 255.7 L 1022.4 254.0 L 1023.4 256.9 L 1024.4 256.2 L 1025.4 254.9 L 1026.4 253.9 L 1027.4 255.7 L 1028.4 256.7 L 1029.4 257.1 L 1030.5 255.5 L 1031.5 256.9 L 1032.5 254.3 L 1033.5 254.2 L 1034.5 256.9 L 1035.5 256.5 L 1036.5 254.4 L 1037.5 255.1 L 1038.5 254.4 L 1039.5 256.3 L 1040.5 257.2 L 1041.5 256.6 L 1042.5 254.5 L 1043.6 256.7 L 1044.6 256.4 L 1045.6 256.1 L 1046.6 256.1 L 1047.6 256.1 L 1048.6 254.0 L 1049.6 257.2 L 1050.6 257.8 L 1051.6 253.9 L 1052.6 254.2 L 1053.6 253.8 L 1054.6 256.1 L 1055.7 254.0 L 1056.7 254.1 L 1057.7 257.0 L 1058.7 254.8 L 1059.7 254.5 L 1060.7 255.2 L 1061.7 255.9 L 1062.7 251.5 L 1063.8 247.0 L 1064.8 242.6 L 1065.9 238.1 L 1066.9 233.7 L 1068.0 229.2 L 1069.0 224.8 L 1070.1 220.3 L 1071.1 215.9 L 1072.2 211.4 L 1073.2 207.0 L 1074.3 202.5 L 1075.3 198.1 L 1076.4 193.7 L 1077.4 189.2 L 1078.5 192.9 L 1079.5 196.6 L 1080.6 200.2 L 1081.7 203.9 L 1082.7 207.6 L 1083.8 211.3 L 1084.9 214.9 L 1085.9 218.6 L 1087.0 222.3 L 1088.0 226.5 L 1089.1 230.6 L 1090.1 234.8 L 1091.2 239.0 L 1092.2 243.1 L 1093.2 247.3 L 1094.3 251.5 L 1095.3 255.6 L 1096.4 259.8 L 1097.4 264.0 L 1098.4 268.1 L 1099.5 272.3 L 1100.5 276.5 L 1101.6 280.6 L 1102.6 284.8 L 1103.6 286.6 L 1104.6 288.3 L 1105.6 290.1 L 1106.6 291.8 L 1107.6 293.6 L 1108.6 295.3 L 1109.6 297.1 L 1110.8 299.1 L 1111.9 301.1 L 1113.0 303.2 L 1114.2 305.2 L 1115.3 307.3 L 1116.5 309.3 L 1117.5 309.3 L 1118.5 309.3 L 1119.5 309.3 L 1120.6 309.3 L 1121.6 309.3 L 1122.6 309.3 L 1123.6 309.3 L 1124.6 309.3 L 1125.7 309.3 L 1126.7 309.3 L 1127.7 309.3 L 1128.7 309.3 L 1129.7 309.3 L 1130.7 309.3 L 1131.8 309.3 L 1132.8 309.3 L 1133.8 309.3 L 1134.8 309.3 L 1135.8 306.4 L 1136.8 303.5 L 1137.9 300.7 L 1138.9 297.8 L 1139.9 294.9 L 1140.9 292.0 L 1142.0 289.1 L 1143.0 286.3 L 1144.0 283.4 L 1145.0 280.5 L 1146.1 277.6 L 1147.1 274.7 L 1148.1 271.8 L 1149.1 269.0 L 1150.2 266.1 L 1151.2 263.2 L 1152.2 260.3 L 1153.2 260.3 L 1154.2 261.2 L 1155.2 261.0 L 1156.2 261.5 L 1157.2 262.2 L 1158.2 260.0 L 1159.2 261.3 L 1160.2 259.1 L 1161.2 262.3 L 1162.2 258.8 L 1163.2 259.6 L 1164.2 258.7 L 1165.2 258.8 L 1166.2 258.8 L 1167.2 260.2 L 1168.2 262.5 L 1169.2 259.5 L 1170.2 261.9 L 1171.2 261.4 L 1172.2 259.9 L 1173.2 260.5 L 1174.2 260.9 L 1175.2 258.8 L 1176.3 260.1 L 1177.3 261.3 L 1178.3 261.7 L 1179.3 259.1 L 1180.3 260.7 L 1181.3 259.5 L 1182.3 261.3 L 1183.3 261.9 L 1184.3 260.5 L 1185.3 259.4 L 1186.3 262.1 L 1187.3 259.5 L 1188.3 259.0 L 1189.3 259.5 L 1190.3 259.4 L 1191.3 262.8 L 1192.3 260.2 L 1193.3 259.3 L 1194.3 262.7 L 1195.3 261.8 L 1196.3 261.8 L 1197.3 260.7 L 1198.3 260.8 L 1199.3 255.8 L 1200.4 250.7 L 1201.4 245.6 L 1202.4 240.5 L 1203.5 235.4 L 1204.5 230.4 L 1205.5 225.3 L 1206.5 220.2 L 1207.6 215.1 L 1208.6 210.0 L 1209.6 205.0 L 1210.7 199.9 L 1211.7 194.8 L 1212.7 189.7 L 1213.8 184.7 L 1214.8 179.6 L 1216.0 183.5 L 1217.1 187.4 L 1218.2 191.3 L 1219.4 195.2 L 1220.5 199.1 L 1221.7 203.0 L 1222.7 207.7 L 1223.7 212.3 L 1224.8 217.0 L 1225.8 221.6 L 1226.8 226.2 L 1227.8 230.9 L 1228.8 235.5 L 1229.8 240.2 L 1230.9 244.8 L 1231.9 249.5 L 1232.9 254.1 L 1233.9 258.8 L 1234.9 262.3 L 1235.9 265.8 L 1236.9 269.3 L 1237.9 272.8 L 1238.9 276.3 L 1239.9 279.8 L 1240.9 283.2 L 1242.0 285.0 L 1243.1 286.7 L 1244.2 288.4 L 1245.2 290.2 L 1246.3 291.9 L 1247.4 293.6 L 1248.5 295.3 L 1249.6 297.1 L 1250.7 298.8 L 1251.8 300.6 L 1252.9 302.3 L 1254.1 304.1 L 1255.2 305.8 L 1256.3 307.6 L 1257.4 309.3 L 1258.4 309.3 L 1259.4 309.3 L 1260.5 309.3 L 1261.5 309.3 L 1262.5 309.3 L 1263.5 309.3 L 1264.6 309.3 L 1265.6 309.3 L 1266.6 309.3 L 1267.6 309.3 L 1268.7 309.3 L 1269.7 309.3 L 1270.7 309.3 L 1271.7 309.3 L 1272.8 309.3 L 1273.8 309.3 L 1274.8 309.3 L 1275.8 306.0 L 1276.8 302.7 L 1277.8 299.4 L 1278.8 296.2 L 1279.9 292.9 L 1280.9 289.6 L 1281.9 286.3 L 1282.9 283.0 L 1283.9 279.7 L 1284.9 276.4 L 1285.9 273.2 L 1286.9 269.9 L 1287.9 266.6 L 1289.0 263.3 L 1290.0 260.0 L 1291.0 256.7 L 1292.0 253.5 L 1293.0 250.2 L 1294.0 250.5 L 1295.0 250.3 L 1296.1 249.1 L 1297.1 252.3 L 1298.1 252.1 L 1299.2 251.8 L 1300.2 251.9 L 1301.2 252.1 L 1302.2 248.4 L 1303.2 248.9 L 1304.3 252.1 L 1305.3 250.4 L 1306.3 251.2 L 1307.3 251.2 L 1308.4 251.1 L 1309.4 249.9 L 1310.4 250.1 L 1311.5 251.1 L 1312.5 251.8 L 1313.5 251.3 L 1314.5 252.1 L 1315.5 250.3 L 1316.6 249.7 L 1317.6 251.1 L 1318.6 252.4 L 1319.7 252.0 L 1320.7 251.2 L 1321.7 250.7" fill="none" stroke="#c8105a" stroke-width="1.1" stroke-linejoin="round"/>
<path d="M 493.5 245.0 L 494.5 246.5 L 495.6 247.1 L 496.6 244.8 L 497.7 246.2 L 498.7 246.5 L 499.8 243.9 L 500.8 240.2 L 501.8 240.7 L 502.9 240.6 L 503.9 244.0 L 505.0 241.6 L 506.0 241.6 L 507.0 240.7 L 508.0 239.0 L 509.0 237.1 L 510.0 234.0 L 511.1 226.8 L 512.1 225.1 L 513.1 222.9 L 514.1 220.6 L 515.1 222.3 L 516.1 219.1 L 517.1 214.6 L 518.1 211.5 L 519.1 208.3 L 520.1 205.8 L 521.2 208.8 L 522.2 202.9 L 523.2 200.1 L 524.2 198.8 L 525.2 196.5 L 526.3 197.6 L 527.5 194.6 L 528.6 196.2 L 529.7 189.4 L 530.9 188.8 L 532.0 190.3 L 533.0 189.8 L 534.0 191.4 L 535.0 187.1 L 536.0 189.3 L 537.0 187.1 L 538.0 187.2 L 539.0 189.5 L 540.0 189.0 L 541.1 189.2 L 542.1 187.6 L 543.1 188.3 L 544.1 189.7 L 545.2 188.3 L 546.2 184.5 L 547.2 189.3 L 548.3 188.8 L 549.3 184.5 L 550.3 186.4 L 551.4 184.3 L 552.4 184.3 L 553.4 184.7 L 554.4 179.9 L 555.5 184.9 L 556.5 182.4 L 557.7 309.3 L 558.7 309.3 L 559.8 309.3 L 560.8 309.3 L 561.8 309.3 L 562.9 309.3 L 563.9 309.3 L 564.9 309.3 L 566.0 309.3 L 567.0 309.3 L 568.1 309.3 L 569.1 309.3 L 570.1 309.3 L 571.2 309.3 L 572.2 309.3 L 573.2 309.3 L 574.3 309.3 L 575.3 309.3 L 576.3 308.3 L 577.3 308.0 L 578.3 303.5 L 579.3 304.3 L 580.4 302.1 L 581.4 297.8 L 582.4 299.1 L 583.4 295.8 L 584.4 291.9 L 585.4 295.7 L 586.4 294.3 L 587.4 291.5 L 588.5 286.3 L 589.5 285.6 L 590.5 286.6 L 591.5 284.3 L 592.5 283.7 L 593.5 280.2 L 594.5 281.3 L 595.5 275.3 L 596.6 272.3 L 597.6 270.3 L 598.6 270.1 L 599.6 267.0 L 600.6 271.7 L 601.6 268.2 L 602.6 262.0 L 603.6 261.7 L 604.7 262.5 L 605.7 257.3 L 606.7 257.8 L 607.7 254.9 L 608.7 255.4 L 609.7 256.5 L 610.8 257.0 L 611.8 255.1 L 612.9 256.9 L 613.9 255.0 L 614.9 250.9 L 616.0 254.9 L 617.0 256.9 L 618.1 256.4 L 619.1 255.4 L 620.1 251.0 L 621.2 253.6 L 622.2 253.9 L 623.3 254.9 L 624.3 252.0 L 625.3 248.6 L 626.3 252.3 L 627.3 253.7 L 628.3 254.6 L 629.4 254.5 L 630.4 253.7 L 631.4 250.1 L 632.4 253.6 L 633.4 254.2 L 634.4 251.1 L 635.4 252.6 L 636.4 247.5 L 637.4 253.3 L 638.4 250.4 L 639.5 248.7 L 640.5 251.1 L 641.5 247.1 L 642.5 250.4 L 643.5 250.2 L 644.5 249.4 L 645.5 245.7 L 646.6 245.7 L 647.6 240.5 L 648.6 239.2 L 649.6 232.3 L 650.7 230.1 L 651.7 229.8 L 652.7 230.4 L 653.7 226.4 L 654.8 223.9 L 655.8 221.6 L 656.8 218.9 L 657.8 212.1 L 658.9 214.4 L 659.9 212.5 L 660.9 206.9 L 661.9 203.7 L 662.9 205.9 L 664.0 202.7 L 665.0 206.4 L 666.0 202.7 L 667.0 204.0 L 668.1 202.8 L 669.1 202.8 L 670.1 204.2 L 671.1 206.6 L 672.2 205.5 L 673.2 200.7 L 674.2 200.2 L 675.2 199.8 L 676.3 203.4 L 677.3 201.0 L 678.3 201.7 L 679.3 199.4 L 680.3 200.2 L 681.3 198.8 L 682.3 200.4 L 683.3 199.3 L 684.3 198.8 L 685.3 201.4 L 686.3 196.7 L 687.3 196.2 L 688.4 201.9 L 689.4 195.5 L 690.4 195.3 L 691.4 197.0 L 692.4 201.0 L 693.4 194.9 L 694.4 199.8 L 695.4 193.9 L 696.4 195.6 L 697.4 196.5 L 698.3 309.3 L 699.3 309.3 L 700.4 309.3 L 701.4 309.3 L 702.4 309.3 L 703.5 309.3 L 704.5 309.3 L 705.5 309.3 L 706.5 309.3 L 707.6 309.3 L 708.6 309.3 L 709.6 309.3 L 710.7 309.3 L 711.7 309.3 L 712.7 309.3 L 713.8 309.3 L 714.8 309.3 L 715.8 309.3 L 716.8 308.5 L 717.8 303.9 L 718.9 302.8 L 719.9 300.1 L 720.9 297.3 L 721.9 300.6 L 722.9 300.6 L 723.9 292.8 L 724.9 297.5 L 725.9 290.1 L 727.0 293.8 L 728.0 287.6 L 729.0 286.2 L 730.0 284.1 L 731.0 284.8 L 732.0 281.0 L 733.0 284.1 L 734.1 279.4 L 735.1 280.2 L 736.1 274.9 L 737.1 274.2 L 738.1 274.7 L 739.1 272.9 L 740.1 274.7 L 741.1 273.2 L 742.2 267.9 L 743.2 267.1 L 744.2 263.0 L 745.2 264.0 L 746.2 262.6 L 747.2 265.2 L 748.2 263.1 L 749.2 259.8 L 750.2 260.8 L 751.2 263.7 L 752.2 259.8 L 753.2 257.2 L 754.2 256.9 L 755.3 261.5 L 756.3 258.0 L 757.3 258.8 L 758.3 255.7 L 759.4 258.5 L 760.4 258.7 L 761.4 256.6 L 762.4 253.0 L 763.5 258.5 L 764.5 258.0 L 765.5 254.2 L 766.5 252.0 L 767.6 254.2 L 768.6 254.4 L 769.6 253.6 L 770.7 251.2 L 771.7 251.8 L 772.8 256.7 L 773.9 251.3 L 774.9 256.0 L 776.0 255.4 L 777.1 251.8 L 778.2 254.7 L 779.2 252.3 L 780.3 256.6 L 781.4 251.9 L 782.4 256.7 L 783.5 254.6 L 784.5 254.2 L 785.5 249.2 L 786.6 247.5 L 787.6 243.4 L 788.6 238.2 L 789.6 236.8 L 790.7 238.9 L 791.7 234.0 L 792.7 229.7 L 793.7 227.4 L 794.8 223.1 L 795.8 222.0 L 796.8 222.0 L 797.8 218.1 L 798.9 211.3 L 799.9 211.9 L 800.9 208.2 L 802.0 205.3 L 803.1 202.8 L 804.2 204.1 L 805.2 202.7 L 806.3 202.1 L 807.4 203.0 L 808.5 197.9 L 809.6 199.6 L 810.6 199.6 L 811.6 196.4 L 812.6 200.2 L 813.6 196.2 L 814.6 196.5 L 815.6 197.4 L 816.6 198.3 L 817.6 200.1 L 818.6 195.6 L 819.6 198.2 L 820.6 195.9 L 821.6 199.2 L 822.7 199.3 L 823.7 198.7 L 824.7 193.9 L 825.7 198.0 L 826.7 192.8 L 827.7 196.2 L 828.7 194.5 L 829.7 195.8 L 830.7 193.8 L 831.7 197.1 L 832.7 194.8 L 833.7 190.9 L 834.7 195.8 L 835.7 193.4 L 837.4 309.3 L 838.4 309.3 L 839.4 309.3 L 840.5 309.3 L 841.5 309.3 L 842.5 309.3 L 843.5 309.3 L 844.6 309.3 L 845.6 309.3 L 846.6 309.3 L 847.6 309.3 L 848.7 309.3 L 849.7 309.3 L 850.7 309.3 L 851.7 309.3 L 852.8 309.3 L 853.8 309.3 L 854.8 309.3 L 855.8 306.6 L 856.8 307.2 L 857.9 305.7 L 858.9 306.0 L 859.9 304.4 L 860.9 296.4 L 862.0 295.6 L 863.0 294.1 L 864.0 292.5 L 865.0 289.8 L 866.1 293.6 L 867.1 289.1 L 868.1 288.0 L 869.1 285.8 L 870.2 281.7 L 871.2 281.3 L 872.2 278.3 L 873.2 282.4 L 874.2 277.1 L 875.3 275.3 L 876.3 273.2 L 877.3 272.4 L 878.3 269.3 L 879.4 271.3 L 880.4 265.4 L 881.4 267.3 L 882.4 264.4 L 883.5 260.7 L 884.5 260.4 L 885.5 261.4 L 886.5 260.3 L 887.6 258.0 L 888.6 254.3 L 889.6 253.6 L 890.6 250.0 L 891.6 250.6 L 892.6 253.8 L 893.6 253.6 L 894.7 250.7 L 895.7 254.1 L 896.7 253.1 L 897.7 255.7 L 898.7 254.4 L 899.7 251.8 L 900.7 250.7 L 901.7 251.0 L 902.7 252.6 L 903.8 248.5 L 904.8 250.5 L 905.8 253.6 L 906.8 254.0 L 907.8 247.7 L 908.8 247.5 L 909.8 247.8 L 910.8 249.8 L 911.8 251.6 L 912.9 253.0 L 913.9 251.7 L 914.9 251.8 L 915.9 246.9 L 916.9 247.0 L 917.9 247.6 L 918.9 251.7 L 919.9 251.0 L 920.9 250.4 L 922.0 245.9 L 923.0 251.1 L 924.0 246.7 L 925.0 247.3 L 926.0 248.3 L 927.0 245.3 L 928.1 239.7 L 929.1 241.6 L 930.1 237.1 L 931.2 236.8 L 932.2 234.5 L 933.3 232.1 L 934.3 227.4 L 935.3 226.0 L 936.4 223.6 L 937.4 214.6 L 938.5 216.6 L 939.5 209.7 L 940.5 208.2 L 941.6 205.3 L 942.6 204.1 L 943.6 202.9 L 944.6 200.7 L 945.6 201.1 L 946.7 202.1 L 947.7 203.0 L 948.7 202.0 L 949.7 201.6 L 950.7 202.7 L 951.8 202.9 L 952.8 205.1 L 953.8 200.3 L 954.8 202.5 L 955.8 202.2 L 956.9 204.6 L 957.9 203.5 L 959.0 198.3 L 960.0 202.1 L 961.1 200.8 L 962.1 198.4 L 963.2 196.8 L 964.2 200.0 L 965.2 199.2 L 966.3 198.6 L 967.3 200.8 L 968.4 194.7 L 969.4 200.1 L 970.5 193.3 L 971.5 198.4 L 972.6 198.0 L 973.6 192.9 L 974.7 192.6 L 975.7 194.4 L 977.4 309.3 L 978.4 309.3 L 979.4 309.3 L 980.5 309.3 L 981.5 309.3 L 982.5 309.3 L 983.5 309.3 L 984.6 309.3 L 985.6 309.3 L 986.6 309.3 L 987.6 309.3 L 988.7 309.3 L 989.7 309.3 L 990.7 309.3 L 991.7 309.3 L 992.8 309.3 L 993.8 309.3 L 994.8 309.3 L 995.8 309.3 L 996.8 305.8 L 997.8 304.7 L 998.8 301.5 L 999.8 303.5 L 1000.8 297.6 L 1001.8 294.9 L 1002.8 295.3 L 1003.8 292.2 L 1004.8 290.6 L 1005.8 292.7 L 1006.8 288.0 L 1007.8 286.5 L 1008.8 286.6 L 1009.8 288.3 L 1010.8 283.2 L 1011.8 279.7 L 1012.8 282.2 L 1013.8 278.3 L 1014.8 275.0 L 1015.8 275.5 L 1016.8 277.7 L 1017.8 272.1 L 1018.8 273.1 L 1019.8 267.4 L 1020.8 267.2 L 1021.8 268.0 L 1022.8 262.4 L 1023.8 262.7 L 1024.8 263.0 L 1025.8 258.1 L 1026.8 256.1 L 1027.8 257.2 L 1028.9 251.9 L 1030.0 249.4 L 1031.1 248.3 L 1032.2 246.8 L 1033.2 245.3 L 1034.2 245.8 L 1035.3 246.1 L 1036.3 242.9 L 1037.3 247.0 L 1038.3 248.7 L 1039.3 244.3 L 1040.3 245.6 L 1041.4 245.1 L 1042.4 244.6 L 1043.4 246.8 L 1044.4 247.0 L 1045.4 247.7 L 1046.4 242.8 L 1047.5 241.8 L 1048.5 243.1 L 1049.5 246.8 L 1050.5 240.9 L 1051.5 241.7 L 1052.5 243.7 L 1053.6 247.0 L 1054.6 241.2 L 1055.6 242.5 L 1056.6 242.4 L 1057.6 246.3 L 1058.6 241.3 L 1059.7 245.9 L 1060.7 242.8 L 1061.7 244.9 L 1062.7 243.3 L 1063.7 239.5 L 1064.7 240.3 L 1065.8 239.7 L 1066.8 243.1 L 1067.8 241.6 L 1068.8 240.0 L 1069.8 236.3 L 1070.8 237.8 L 1071.8 233.0 L 1072.9 226.8 L 1073.9 226.0 L 1074.9 223.0 L 1075.9 224.5 L 1076.9 219.5 L 1077.9 216.6 L 1078.9 214.8 L 1079.9 214.4 L 1080.9 213.8 L 1081.9 212.6 L 1083.0 204.4 L 1084.0 201.8 L 1085.0 203.9 L 1086.0 198.4 L 1087.0 197.8 L 1088.0 198.1 L 1089.0 196.3 L 1090.1 194.6 L 1091.1 197.8 L 1092.1 195.5 L 1093.1 197.7 L 1094.1 195.7 L 1095.1 198.6 L 1096.2 196.7 L 1097.2 196.3 L 1098.2 191.7 L 1099.2 196.7 L 1100.2 192.2 L 1101.2 196.5 L 1102.3 190.1 L 1103.3 195.3 L 1104.3 195.5 L 1105.3 194.4 L 1106.3 189.2 L 1107.3 190.7 L 1108.4 188.9 L 1109.4 191.3 L 1110.4 193.6 L 1111.4 191.8 L 1112.4 190.7 L 1113.4 186.8 L 1114.5 192.1 L 1115.5 191.2 L 1116.5 189.2 L 1117.4 309.3 L 1118.4 309.3 L 1119.4 309.3 L 1120.5 309.3 L 1121.5 309.3 L 1122.5 309.3 L 1123.5 309.3 L 1124.6 309.3 L 1125.6 309.3 L 1126.6 309.3 L 1127.6 309.3 L 1128.7 309.3 L 1129.7 309.3 L 1130.7 309.3 L 1131.7 309.3 L 1132.8 309.3 L 1133.8 309.3 L 1134.8 309.3 L 1135.8 305.2 L 1136.9 308.4 L 1137.9 300.9 L 1138.9 303.7 L 1139.9 300.2 L 1141.0 297.8 L 1142.0 294.4 L 1143.0 298.3 L 1144.1 291.3 L 1145.1 294.1 L 1146.1 288.7 L 1147.2 291.7 L 1148.2 284.9 L 1149.2 287.1 L 1150.2 285.2 L 1151.3 284.7 L 1152.3 281.0 L 1153.3 279.2 L 1154.4 273.0 L 1155.4 273.8 L 1156.4 273.7 L 1157.5 267.8 L 1158.5 271.6 L 1159.5 269.6 L 1160.5 262.8 L 1161.6 261.1 L 1162.6 262.4 L 1163.6 259.9 L 1164.6 256.6 L 1165.6 261.6 L 1166.6 254.6 L 1167.6 254.7 L 1168.6 253.7 L 1169.6 253.6 L 1170.6 251.0 L 1171.6 255.8 L 1172.6 254.9 L 1173.6 255.1 L 1174.6 252.6 L 1175.6 251.9 L 1176.6 251.7 L 1177.6 252.7 L 1178.6 249.9 L 1179.7 249.0 L 1180.7 249.3 L 1181.7 254.0 L 1182.7 253.0 L 1183.7 252.3 L 1184.7 251.9 L 1185.7 249.4 L 1186.7 251.8 L 1187.7 248.6 L 1188.7 250.3 L 1189.7 250.0 L 1190.7 247.4 L 1191.7 245.6 L 1192.7 250.4 L 1193.7 249.2 L 1194.7 244.6 L 1195.7 249.6 L 1196.7 250.6 L 1197.7 249.3 L 1198.8 244.8 L 1199.8 245.2 L 1200.8 243.6 L 1201.8 246.3 L 1202.8 249.2 L 1203.8 247.2 L 1204.8 244.2 L 1205.8 246.1 L 1206.8 247.6 L 1207.8 245.0 L 1208.8 243.0 L 1209.8 239.7 L 1210.9 237.6 L 1211.9 234.2 L 1212.9 233.6 L 1213.9 231.5 L 1215.0 223.6 L 1216.0 221.2 L 1217.0 220.5 L 1218.0 219.8 L 1219.1 215.8 L 1220.1 211.3 L 1221.1 206.2 L 1222.1 206.3 L 1223.2 200.1 L 1224.2 200.4 L 1225.2 197.8 L 1226.2 199.6 L 1227.3 196.3 L 1228.3 196.0 L 1229.3 195.6 L 1230.3 194.4 L 1231.4 198.7 L 1232.4 195.5 L 1233.4 192.7 L 1234.5 196.8 L 1235.5 197.0 L 1236.5 195.7 L 1237.6 194.6 L 1238.6 193.2 L 1239.6 193.7 L 1240.6 191.1 L 1241.7 193.9 L 1242.7 192.3 L 1243.7 189.7 L 1244.8 190.2 L 1245.8 187.0 L 1246.8 186.7 L 1247.9 191.0 L 1248.9 190.0 L 1249.9 188.3 L 1250.9 187.9 L 1252.0 188.7 L 1253.0 187.4 L 1254.1 186.9 L 1255.2 186.3 L 1256.3 185.8 L 1257.4 185.3 L 1257.7 309.3 L 1258.7 309.3 L 1259.7 309.3 L 1260.7 309.3 L 1261.7 309.3 L 1262.7 309.3 L 1263.7 309.3 L 1264.7 309.3 L 1265.7 309.3 L 1266.8 309.3 L 1267.8 309.3 L 1268.8 309.3 L 1269.8 309.3 L 1270.8 309.3 L 1271.8 309.3 L 1272.8 309.3 L 1273.8 309.3 L 1274.8 309.3 L 1275.8 305.2 L 1276.8 308.2 L 1277.8 304.7 L 1278.8 305.5 L 1279.9 298.7 L 1280.9 299.1 L 1281.9 294.8 L 1282.9 298.9 L 1283.9 293.5 L 1284.9 292.7 L 1285.9 294.8 L 1286.9 288.0 L 1287.9 286.0 L 1289.0 289.8 L 1290.0 282.3 L 1291.0 281.8 L 1292.0 281.4 L 1293.0 280.2 L 1294.0 280.5 L 1295.0 280.3 L 1296.0 275.9 L 1297.0 271.7 L 1298.0 274.5 L 1299.1 271.1 L 1300.1 270.8 L 1301.1 266.5 L 1302.1 263.0 L 1303.1 261.9 L 1304.1 264.4 L 1305.1 261.9 L 1306.1 263.1 L 1307.1 258.0 L 1308.2 254.2 L 1309.2 252.6 L 1310.2 256.3 L 1311.2 252.2 L 1312.2 250.2 L 1313.3 252.8 L 1314.3 250.3 L 1315.4 246.8 L 1316.4 250.8 L 1317.5 246.8 L 1318.5 245.9 L 1319.6 246.6 L 1320.6 250.6 L 1321.7 248.3" fill="none" stroke="#24476b" stroke-width="1.1" stroke-linejoin="round"/>
<rect x="493.3" y="141.8" width="85.69999999999999" height="23.0" rx="2.5" fill="#fff" stroke="#e2e2e2" stroke-width="1" />
<circle cx="502" cy="153.3" r="5" fill="#c8105a" />
<text x="511.3" y="157.0" font-size="10.89" fill="#333" textLength="48.2" lengthAdjust="spacingAndGlyphs" text-anchor="start" >BA:TEMP.1</text>
<line x1="565.4" y1="153.3" x2="574.1999999999999" y2="153.3" stroke="#333" stroke-width="1.2" />
<line x1="569.8" y1="148.9" x2="569.8" y2="157.70000000000002" stroke="#333" stroke-width="1.2" />
<path d="M 564.1999999999999 153.3 L 566.5999999999999 151.10000000000002 L 566.5999999999999 155.5 Z M 575.4 153.3 L 573.0 151.10000000000002 L 573.0 155.5 Z M 569.8 147.70000000000002 L 567.5999999999999 150.10000000000002 L 572.0 150.10000000000002 Z M 569.8 158.9 L 567.5999999999999 156.5 L 572.0 156.5 Z" fill="#333" />
<rect x="583.5" y="141.8" width="89" height="23.0" rx="2.5" fill="#fff" stroke="#e2e2e2" stroke-width="1" />
<circle cx="592" cy="153.3" r="5" fill="#1f4266" />
<text x="601.3" y="157.0" font-size="10.89" fill="#333" textLength="52.0" lengthAdjust="spacingAndGlyphs" text-anchor="start" >BA:CONC.1</text>
<line x1="659.2" y1="153.3" x2="668.0" y2="153.3" stroke="#333" stroke-width="1.2" />
<line x1="663.6" y1="148.9" x2="663.6" y2="157.70000000000002" stroke="#333" stroke-width="1.2" />
<path d="M 658.0 153.3 L 660.4 151.10000000000002 L 660.4 155.5 Z M 669.2 153.3 L 666.8000000000001 151.10000000000002 L 666.8000000000001 155.5 Z M 663.6 147.70000000000002 L 661.4 150.10000000000002 L 665.8000000000001 150.10000000000002 Z M 663.6 158.9 L 661.4 156.5 L 665.8000000000001 156.5 Z" fill="#333" />
<line x1="493" y1="485.3" x2="1322" y2="485.3" stroke="#e8e8e8" stroke-width="1" />
<line x1="493" y1="453.08000000000004" x2="1322" y2="453.08000000000004" stroke="#e8e8e8" stroke-width="1" />
<line x1="493" y1="420.86" x2="1322" y2="420.86" stroke="#e8e8e8" stroke-width="1" />
<line x1="493" y1="388.64" x2="1322" y2="388.64" stroke="#e8e8e8" stroke-width="1" />
<line x1="493" y1="356.42" x2="1322" y2="356.42" stroke="#e8e8e8" stroke-width="1" />
<line x1="493" y1="350" x2="1322" y2="350" stroke="#e8e8e8" stroke-width="1" />
<line x1="577.4" y1="350" x2="577.4" y2="485.3" stroke="#e8e8e8" stroke-width="1" />
<line x1="681.05" y1="350" x2="681.05" y2="485.3" stroke="#e8e8e8" stroke-width="1" />
<line x1="784.7" y1="350" x2="784.7" y2="485.3" stroke="#e8e8e8" stroke-width="1" />
<line x1="888.35" y1="350" x2="888.35" y2="485.3" stroke="#e8e8e8" stroke-width="1" />
<line x1="992.0" y1="350" x2="992.0" y2="485.3" stroke="#e8e8e8" stroke-width="1" />
<line x1="1095.65" y1="350" x2="1095.65" y2="485.3" stroke="#e8e8e8" stroke-width="1" />
<line x1="1199.3000000000002" y1="350" x2="1199.3000000000002" y2="485.3" stroke="#e8e8e8" stroke-width="1" />
<line x1="1302.95" y1="350" x2="1302.95" y2="485.3" stroke="#e8e8e8" stroke-width="1" />
<line x1="493" y1="350" x2="493" y2="485.3" stroke="#ff9a70" stroke-width="1.6" />
<line x1="487.5" y1="485.3" x2="493" y2="485.3" stroke="#ff4f14" stroke-width="1.4" />
<line x1="487.5" y1="453.08000000000004" x2="493" y2="453.08000000000004" stroke="#ff4f14" stroke-width="1.4" />
<line x1="487.5" y1="420.86" x2="493" y2="420.86" stroke="#ff4f14" stroke-width="1.4" />
<line x1="487.5" y1="388.64" x2="493" y2="388.64" stroke="#ff4f14" stroke-width="1.4" />
<line x1="487.5" y1="350" x2="493" y2="350" stroke="#ff4f14" stroke-width="1.4" />
<line x1="487.5" y1="356.42" x2="493" y2="356.42" stroke="#ffc0a8" stroke-width="1.4" />
<text x="483.8" y="489.2" font-size="10.80" fill="#333" textLength="5.4" lengthAdjust="spacingAndGlyphs" text-anchor="end" >0</text>
<text x="483.8" y="457.0" font-size="10.80" fill="#333" textLength="10.8" lengthAdjust="spacingAndGlyphs" text-anchor="end" >10</text>
<text x="483.8" y="424.8" font-size="10.80" fill="#333" textLength="10.8" lengthAdjust="spacingAndGlyphs" text-anchor="end" >20</text>
<text x="483.8" y="392.5" font-size="10.80" fill="#333" textLength="10.8" lengthAdjust="spacingAndGlyphs" text-anchor="end" >30</text>
<text x="483.8" y="360.3" font-size="10.80" fill="#b5b5b5" textLength="10.8" lengthAdjust="spacingAndGlyphs" text-anchor="end" >40</text>
<text x="483.8" y="353.9" font-size="10.80" fill="#333" textLength="10.8" lengthAdjust="spacingAndGlyphs" text-anchor="end" >42</text>
<path d="M 493.5 421.8 L 495.0 414.7 L 496.0 414.2 L 497.1 413.8 L 498.1 413.6 L 499.1 413.0 L 500.2 414.2 L 501.2 413.4 L 502.2 418.2 L 503.3 416.1 L 504.3 416.0 L 506.0 418.3 L 507.1 414.3 L 508.2 414.1 L 509.3 411.0 L 510.4 413.3 L 511.5 409.8 L 512.6 409.2 L 513.7 405.9 L 514.8 404.4 L 515.9 401.7 L 517.1 402.2 L 518.2 398.8 L 519.4 396.1 L 520.6 390.5 L 521.7 390.3 L 522.7 387.2 L 523.7 388.6 L 524.7 383.6 L 525.7 385.3 L 526.7 381.1 L 527.7 382.0 L 528.7 378.3 L 529.7 379.0 L 530.8 372.5 L 531.8 374.0 L 532.9 372.1 L 533.9 366.2 L 534.9 364.8 L 536.0 365.9 L 537.0 360.5 L 538.1 360.7 L 539.1 359.0 L 540.1 356.5 L 541.2 357.4 L 542.2 352.1 L 543.3 351.8 L 544.3 351.3 L 545.3 348.9 L 546.3 349.3 L 547.3 352.5 L 548.3 352.2 L 549.4 353.2 L 550.4 353.4 L 551.4 353.9 L 552.4 352.7 L 553.4 351.2 L 554.4 354.3 L 555.4 350.9 L 556.4 352.7 L 557.4 352.9 L 558.4 350.3 L 559.5 352.1 L 560.5 353.0 L 561.5 352.2 L 562.5 351.1 L 563.5 352.2 L 564.5 356.6 L 565.6 353.9 L 566.6 360.9 L 567.7 359.2 L 568.7 360.8 L 569.7 367.1 L 570.8 365.2 L 571.8 369.4 L 572.9 370.4 L 573.9 372.9 L 574.9 377.3 L 576.0 379.1 L 577.0 380.3 L 578.1 378.2 L 579.1 382.5 L 580.1 390.0 L 581.2 397.5 L 582.2 404.9 L 583.3 412.4 L 584.3 419.9 L 585.4 428.2 L 586.5 436.5 L 587.6 444.8 L 588.7 453.1 L 589.7 457.3 L 590.7 457.0 L 591.8 458.8 L 592.8 461.3 L 593.8 467.0 L 594.8 468.9 L 595.8 472.2 L 596.9 475.4 L 597.9 478.7 L 599.0 482.0 L 600.0 485.3 L 601.0 485.3 L 602.1 485.3 L 603.1 485.3 L 604.1 485.3 L 605.2 485.3 L 606.2 485.3 L 607.2 485.3 L 608.2 485.3 L 609.3 485.3 L 610.3 485.3 L 611.3 485.3 L 612.4 485.3 L 613.4 485.3 L 614.4 485.3 L 615.5 485.3 L 616.5 485.3 L 617.6 480.7 L 618.7 476.1 L 619.8 471.5 L 621.0 466.9 L 622.1 462.3 L 623.2 457.7 L 624.3 453.1 L 625.4 449.4 L 626.5 445.7 L 627.6 442.0 L 628.6 438.3 L 629.7 434.6 L 630.8 430.8 L 631.9 427.1 L 633.0 423.4 L 634.0 424.1 L 635.0 423.1 L 636.0 421.8 L 637.1 425.1 L 638.1 421.8 L 639.1 421.4 L 640.1 421.0 L 641.1 425.2 L 642.2 420.4 L 643.2 424.7 L 644.2 423.4 L 645.2 422.5 L 646.3 420.3 L 647.4 417.1 L 648.5 418.5 L 649.5 413.8 L 650.6 414.2 L 651.7 413.8 L 652.8 412.1 L 653.9 409.6 L 654.9 409.5 L 655.9 408.3 L 656.9 406.2 L 657.9 401.6 L 658.9 398.3 L 660.0 400.9 L 661.0 399.7 L 662.0 393.1 L 663.0 393.7 L 664.0 392.6 L 665.0 391.7 L 666.0 388.6 L 667.0 386.1 L 668.1 382.8 L 669.1 382.6 L 670.2 380.7 L 671.2 380.5 L 672.3 373.9 L 673.4 376.4 L 674.4 371.9 L 675.5 368.0 L 676.5 367.7 L 677.5 368.2 L 678.6 363.8 L 679.6 361.3 L 680.7 361.6 L 681.7 360.9 L 682.7 359.4 L 683.8 362.9 L 684.8 361.2 L 685.9 362.7 L 686.9 359.1 L 687.9 361.9 L 689.0 361.0 L 690.0 358.2 L 691.0 358.9 L 692.1 358.3 L 693.1 360.9 L 694.1 360.8 L 695.2 359.5 L 696.2 360.8 L 697.3 361.7 L 698.3 360.6 L 699.4 362.9 L 700.5 365.9 L 701.6 366.5 L 702.7 365.1 L 703.8 367.0 L 704.9 370.4 L 706.0 372.9 L 707.1 374.6 L 708.2 377.2 L 709.2 380.2 L 710.3 381.0 L 711.4 380.2 L 712.5 381.5 L 713.5 385.8 L 714.6 385.4 L 715.7 388.6 L 716.7 395.3 L 717.8 401.9 L 718.8 408.6 L 719.9 415.2 L 720.9 421.8 L 721.9 428.9 L 722.9 436.0 L 724.0 443.1 L 725.0 450.2 L 726.0 457.3 L 727.0 464.4 L 728.1 464.1 L 729.3 465.7 L 730.4 467.9 L 731.4 470.4 L 732.4 472.9 L 733.4 475.4 L 734.4 477.8 L 735.4 480.3 L 736.4 482.8 L 737.4 485.3 L 738.4 485.3 L 739.4 485.3 L 740.4 485.3 L 741.4 485.3 L 742.4 485.3 L 743.4 485.3 L 744.4 485.3 L 745.4 485.3 L 746.4 485.3 L 747.5 485.3 L 748.5 485.3 L 749.5 485.3 L 750.5 485.3 L 751.5 485.3 L 752.5 485.3 L 753.5 485.3 L 754.5 485.3 L 755.5 485.3 L 756.5 485.3 L 757.5 480.9 L 758.6 476.5 L 759.6 472.2 L 760.7 467.8 L 761.7 463.4 L 762.8 459.7 L 763.9 456.0 L 764.9 452.3 L 766.0 448.6 L 767.0 444.7 L 768.0 440.9 L 769.0 437.1 L 770.0 433.3 L 771.0 429.5 L 772.0 425.6 L 773.0 421.8 L 774.0 421.1 L 775.1 420.7 L 776.1 422.9 L 777.2 421.3 L 778.2 423.6 L 779.3 422.7 L 780.4 421.3 L 781.4 421.9 L 782.5 424.0 L 783.5 423.1 L 784.5 419.1 L 785.6 418.9 L 786.6 417.6 L 787.7 418.8 L 788.7 414.3 L 789.7 414.2 L 790.8 410.3 L 791.8 409.6 L 792.9 406.1 L 793.9 406.0 L 794.9 403.4 L 796.0 400.7 L 797.0 401.1 L 798.1 397.7 L 799.1 395.3 L 800.1 392.9 L 801.2 393.5 L 802.2 389.1 L 803.3 387.0 L 804.3 387.0 L 805.3 384.1 L 806.4 380.7 L 807.4 378.9 L 808.5 379.2 L 809.5 377.2 L 810.6 377.2 L 811.6 371.8 L 812.7 369.3 L 813.8 369.7 L 814.8 367.7 L 815.9 364.7 L 817.0 362.6 L 818.1 360.6 L 819.1 361.5 L 820.2 356.4 L 821.3 355.4 L 822.4 353.0 L 823.5 351.9 L 824.5 352.2 L 825.5 351.1 L 826.5 350.2 L 827.5 350.8 L 828.6 350.2 L 829.6 353.7 L 830.6 352.9 L 831.6 351.4 L 832.6 350.2 L 833.6 352.3 L 834.6 349.8 L 835.6 349.9 L 836.6 352.9 L 837.7 350.6 L 838.7 351.7 L 839.7 352.5 L 840.7 352.0 L 841.7 350.0 L 842.7 353.0 L 843.8 355.8 L 844.8 357.8 L 845.8 360.7 L 846.8 360.6 L 847.9 363.1 L 848.9 364.0 L 849.9 366.1 L 850.9 370.0 L 852.0 368.7 L 853.0 372.9 L 854.1 377.0 L 855.2 376.4 L 856.3 378.6 L 857.4 379.0 L 858.4 386.7 L 859.4 394.4 L 860.5 402.2 L 861.5 409.9 L 862.5 417.6 L 863.5 425.4 L 864.7 431.7 L 865.8 438.0 L 867.0 444.4 L 868.1 447.3 L 869.1 451.2 L 870.2 449.9 L 871.3 454.0 L 872.3 457.2 L 873.3 461.4 L 874.3 460.9 L 875.4 466.0 L 876.4 466.2 L 877.4 468.9 L 879.0 485.3 L 880.0 485.3 L 881.1 485.3 L 882.1 485.3 L 883.2 485.3 L 884.2 485.3 L 885.3 485.3 L 886.3 485.3 L 887.4 485.3 L 888.4 485.3 L 889.4 485.3 L 890.5 485.3 L 891.5 485.3 L 892.6 485.3 L 893.6 485.3 L 894.7 485.3 L 895.7 485.3 L 896.8 481.3 L 897.9 477.2 L 898.9 473.2 L 900.0 469.2 L 901.1 465.2 L 902.1 461.1 L 903.2 457.1 L 904.3 453.1 L 905.4 449.5 L 906.4 445.9 L 907.5 442.3 L 908.6 438.8 L 909.6 435.2 L 910.7 431.6 L 911.8 428.0 L 912.8 424.4 L 913.9 420.9 L 914.9 421.7 L 915.9 420.5 L 916.9 418.6 L 917.9 419.4 L 918.9 421.5 L 919.9 419.5 L 921.0 420.5 L 922.0 421.9 L 923.0 423.2 L 924.0 420.9 L 925.0 421.1 L 926.0 419.1 L 927.0 421.5 L 928.0 416.8 L 929.1 416.4 L 930.1 415.5 L 931.2 410.5 L 932.2 412.8 L 933.2 410.0 L 934.3 405.4 L 935.3 402.9 L 936.4 403.1 L 937.4 399.0 L 938.5 396.6 L 939.6 393.5 L 940.7 394.4 L 941.8 392.4 L 942.8 391.7 L 943.9 389.6 L 945.0 384.4 L 946.1 385.1 L 947.2 383.5 L 948.3 378.4 L 949.4 376.4 L 950.5 375.9 L 951.5 375.5 L 952.6 369.6 L 953.7 369.9 L 954.8 367.7 L 955.9 366.1 L 957.1 364.5 L 958.2 359.1 L 959.4 359.6 L 960.6 358.6 L 961.7 355.5 L 962.7 355.6 L 963.7 357.5 L 964.8 355.0 L 965.8 356.0 L 966.8 356.8 L 967.8 354.3 L 968.9 354.2 L 969.9 358.4 L 970.9 355.8 L 971.9 357.2 L 973.0 353.8 L 974.0 354.7 L 975.0 357.5 L 976.0 357.4 L 977.1 358.1 L 978.1 353.8 L 979.1 356.4 L 980.2 359.8 L 981.4 360.6 L 982.5 363.6 L 983.6 365.1 L 984.7 367.6 L 985.9 369.2 L 987.0 372.9 L 988.1 377.2 L 989.1 376.3 L 990.2 381.1 L 991.3 382.5 L 992.3 385.2 L 993.4 387.8 L 994.4 390.4 L 995.5 393.1 L 996.5 395.7 L 997.6 403.5 L 998.7 411.4 L 999.8 419.2 L 1000.9 427.0 L 1001.9 434.8 L 1003.0 442.6 L 1004.1 450.4 L 1005.2 458.2 L 1006.2 460.0 L 1007.2 463.0 L 1008.2 465.2 L 1009.2 466.0 L 1010.2 468.3 L 1011.2 470.8 L 1012.2 472.1 L 1013.2 474.7 L 1014.3 477.4 L 1015.3 480.0 L 1016.4 482.7 L 1017.4 485.3 L 1018.4 485.3 L 1019.4 485.3 L 1020.5 485.3 L 1021.5 485.3 L 1022.5 485.3 L 1023.5 485.3 L 1024.5 485.3 L 1025.5 485.3 L 1026.5 485.3 L 1027.6 485.3 L 1028.6 485.3 L 1029.6 485.3 L 1030.6 485.3 L 1031.6 485.3 L 1032.7 485.3 L 1033.7 485.3 L 1034.7 485.3 L 1035.7 485.3 L 1036.8 481.2 L 1037.8 477.1 L 1038.9 473.0 L 1040.0 468.9 L 1041.0 465.3 L 1042.1 461.7 L 1043.1 458.0 L 1044.2 454.4 L 1045.2 450.8 L 1046.3 447.2 L 1047.3 443.6 L 1048.4 440.0 L 1049.4 436.4 L 1050.5 432.8 L 1051.5 429.2 L 1052.6 425.6 L 1053.6 422.0 L 1054.7 418.3 L 1055.7 414.7 L 1056.7 413.6 L 1057.7 414.5 L 1058.7 417.5 L 1059.7 416.4 L 1060.7 415.5 L 1061.8 413.2 L 1062.8 413.5 L 1063.8 415.4 L 1064.8 418.2 L 1065.8 414.4 L 1066.8 416.3 L 1067.8 416.0 L 1068.8 413.4 L 1069.8 410.4 L 1070.8 408.5 L 1071.9 407.0 L 1072.9 402.5 L 1073.9 402.9 L 1074.9 400.6 L 1075.9 396.0 L 1077.0 397.1 L 1078.0 394.3 L 1079.0 389.2 L 1080.0 388.6 L 1081.1 389.1 L 1082.1 383.4 L 1083.2 382.4 L 1084.3 382.0 L 1085.3 381.0 L 1086.4 376.7 L 1087.5 374.2 L 1088.5 376.4 L 1089.6 372.9 L 1090.6 371.4 L 1091.6 369.5 L 1092.6 368.3 L 1093.6 367.6 L 1094.6 367.0 L 1095.6 363.2 L 1096.6 360.5 L 1097.6 362.8 L 1098.6 360.4 L 1099.6 355.8 L 1100.6 354.4 L 1101.6 353.6 L 1102.6 352.9 L 1103.7 354.9 L 1104.8 350.9 L 1105.9 349.2 L 1107.0 351.3 L 1108.0 348.7 L 1109.1 350.2 L 1110.2 353.6 L 1111.2 349.5 L 1112.2 352.7 L 1113.3 350.5 L 1114.3 348.9 L 1115.4 350.2 L 1116.5 353.1 L 1117.5 352.3 L 1118.5 349.1 L 1119.6 353.1 L 1120.7 350.7 L 1121.7 351.3 L 1122.7 353.9 L 1123.7 357.3 L 1124.8 357.1 L 1125.8 362.2 L 1126.8 364.0 L 1127.8 364.2 L 1128.9 366.8 L 1130.1 370.4 L 1131.2 372.5 L 1132.3 371.9 L 1133.4 373.0 L 1134.6 374.4 L 1135.7 378.3 L 1136.8 385.1 L 1137.8 391.9 L 1138.9 398.6 L 1139.9 405.4 L 1141.0 412.2 L 1142.0 418.9 L 1143.1 425.7 L 1144.1 432.5 L 1145.2 439.2 L 1146.2 442.0 L 1147.3 444.8 L 1148.3 447.5 L 1149.4 450.3 L 1150.4 453.1 L 1151.4 457.2 L 1152.4 457.9 L 1153.4 460.8 L 1154.4 461.6 L 1155.4 464.4 L 1156.4 464.4 L 1157.4 468.9 L 1159.1 485.3 L 1160.1 485.3 L 1161.1 485.3 L 1162.2 485.3 L 1163.2 485.3 L 1164.2 485.3 L 1165.2 485.3 L 1166.3 485.3 L 1167.3 485.3 L 1168.3 485.3 L 1169.3 485.3 L 1170.4 485.3 L 1171.4 485.3 L 1172.4 485.3 L 1173.4 485.3 L 1174.5 485.3 L 1175.5 485.3 L 1176.5 485.3 L 1177.6 481.3 L 1178.7 477.2 L 1179.8 473.2 L 1180.8 469.2 L 1181.9 465.2 L 1183.0 461.1 L 1184.1 457.1 L 1185.2 453.1 L 1186.3 448.7 L 1187.4 444.3 L 1188.5 440.0 L 1189.7 435.6 L 1190.8 431.2 L 1191.9 426.8 L 1193.0 422.5 L 1194.0 423.2 L 1195.0 424.9 L 1196.0 421.6 L 1197.1 424.5 L 1198.1 422.1 L 1199.1 422.8 L 1200.1 420.7 L 1201.1 422.6 L 1202.2 422.3 L 1203.2 424.2 L 1204.2 422.8 L 1205.2 423.1 L 1206.3 422.1 L 1207.3 417.2 L 1208.4 416.2 L 1209.5 415.8 L 1210.5 413.0 L 1211.6 410.0 L 1212.7 405.9 L 1213.7 406.4 L 1214.8 402.5 L 1215.8 399.3 L 1216.9 397.5 L 1217.9 398.3 L 1219.0 393.3 L 1220.0 394.1 L 1221.0 391.9 L 1222.1 387.4 L 1223.1 387.1 L 1224.2 381.7 L 1225.2 381.6 L 1226.2 380.1 L 1227.3 379.4 L 1228.4 375.4 L 1229.4 377.8 L 1230.5 372.7 L 1231.5 374.6 L 1232.5 372.5 L 1233.6 366.8 L 1234.7 366.7 L 1235.7 366.1 L 1236.7 364.9 L 1237.8 362.8 L 1238.8 355.7 L 1239.9 354.7 L 1240.9 352.9 L 1241.9 351.1 L 1242.9 354.5 L 1243.9 351.9 L 1244.9 353.2 L 1246.0 353.7 L 1247.0 353.1 L 1248.0 351.5 L 1249.0 352.8 L 1250.0 352.5 L 1251.0 353.7 L 1252.0 350.0 L 1253.0 350.8 L 1254.0 349.9 L 1255.1 351.7 L 1256.1 349.5 L 1257.1 351.1 L 1258.1 350.6 L 1259.1 350.9 L 1260.1 352.9 L 1261.2 354.3 L 1262.2 358.4 L 1263.2 362.3 L 1264.2 364.9 L 1265.3 366.4 L 1266.3 369.5 L 1267.3 367.4 L 1268.3 371.9 L 1269.4 372.7 L 1270.4 376.4 L 1271.4 381.0 L 1272.4 380.5 L 1273.4 380.3 L 1274.4 383.7 L 1275.4 386.7 L 1276.4 388.4 L 1277.4 390.3 L 1278.5 398.1 L 1279.6 406.0 L 1280.7 413.8 L 1281.8 421.7 L 1282.8 429.5 L 1283.9 437.4 L 1285.0 445.2 L 1286.1 453.1 L 1287.2 457.3 L 1288.2 459.1 L 1289.3 461.2 L 1290.4 462.2 L 1291.4 464.2 L 1292.5 463.8 L 1293.6 469.7 L 1294.6 471.2 L 1295.7 472.1 L 1296.8 476.5 L 1298.0 480.9 L 1299.1 485.3 L 1300.1 485.3 L 1301.2 485.3 L 1302.2 485.3 L 1303.2 485.3 L 1304.3 485.3 L 1305.3 485.3 L 1306.4 485.3 L 1307.4 485.3 L 1308.4 485.3 L 1309.5 485.3 L 1310.5 485.3 L 1311.5 485.3 L 1312.6 485.3 L 1313.6 485.3 L 1314.7 485.3 L 1315.7 485.3 L 1316.7 481.1 L 1317.7 476.9 L 1318.7 472.7 L 1319.7 468.5 L 1320.7 464.4 L 1321.7 460.2" fill="none" stroke="#ff5214" stroke-width="1.1" stroke-linejoin="round"/>
<rect x="493.5" y="318.1" width="70" height="23.69999999999999" rx="2.5" fill="#fff" stroke="#e2e2e2" stroke-width="1" />
<circle cx="502" cy="330" r="5.1" fill="#ff4f14" />
<path d="M 511.5 325 L 518.7 329 L 511.5 333 Z" fill="#222" />
<text x="522.6" y="333.0" font-size="9.78" fill="#333" textLength="21.9" lengthAdjust="spacingAndGlyphs" text-anchor="start" >Level</text>
<line x1="550.0" y1="329.9" x2="558.8" y2="329.9" stroke="#333" stroke-width="1.2" />
<line x1="554.4" y1="325.49999999999994" x2="554.4" y2="334.3" stroke="#333" stroke-width="1.2" />
<path d="M 548.8 329.9 L 551.1999999999999 327.7 L 551.1999999999999 332.09999999999997 Z M 560.0 329.9 L 557.6 327.7 L 557.6 332.09999999999997 Z M 554.4 324.29999999999995 L 552.1999999999999 326.69999999999993 L 556.6 326.69999999999993 Z M 554.4 335.5 L 552.1999999999999 333.1 L 556.6 333.1 Z" fill="#333" />
<line x1="493" y1="525.7" x2="1322" y2="525.7" stroke="#e8e8e8" stroke-width="1" />
<line x1="493" y1="661.6" x2="1322" y2="661.6" stroke="#e8e8e8" stroke-width="1" />
<line x1="577.4" y1="525.7" x2="577.4" y2="661.6" stroke="#e8e8e8" stroke-width="1" />
<line x1="681.05" y1="525.7" x2="681.05" y2="661.6" stroke="#e8e8e8" stroke-width="1" />
<line x1="784.7" y1="525.7" x2="784.7" y2="661.6" stroke="#e8e8e8" stroke-width="1" />
<line x1="888.35" y1="525.7" x2="888.35" y2="661.6" stroke="#e8e8e8" stroke-width="1" />
<line x1="992.0" y1="525.7" x2="992.0" y2="661.6" stroke="#e8e8e8" stroke-width="1" />
<line x1="1095.65" y1="525.7" x2="1095.65" y2="661.6" stroke="#e8e8e8" stroke-width="1" />
<line x1="1199.3000000000002" y1="525.7" x2="1199.3000000000002" y2="661.6" stroke="#e8e8e8" stroke-width="1" />
<line x1="1302.95" y1="525.7" x2="1302.95" y2="661.6" stroke="#e8e8e8" stroke-width="1" />
<text x="449.7" y="528.7" font-size="9.36" fill="#333" textLength="34.1" lengthAdjust="spacingAndGlyphs" text-anchor="start" >ACTIVE</text>
<text x="439.5" y="665.2" font-size="10.20" fill="#333" textLength="44.1" lengthAdjust="spacingAndGlyphs" text-anchor="start" >INACTIVE</text>
<path d="M 487.3 661.6 L 493.4 661.6 L 493.4 525.7 L 516.3 525.7 L 516.3 661.6 L 533.6 661.6 L 533.6 525.7 L 656.2 525.7 L 656.2 661.6 L 673.5 661.6 L 673.5 525.7 L 796.1 525.7 L 796.1 661.6 L 813.4 661.6 L 813.4 525.7 L 936.0 525.7 L 936.0 661.6 L 953.3 661.6 L 953.3 525.7 L 1075.9 525.7 L 1075.9 661.6 L 1093.2 661.6 L 1093.2 525.7 L 1215.8 525.7 L 1215.8 661.6 L 1233.1 661.6 L 1233.1 525.7 L 1322 525.7" fill="none" stroke="#68a84a" stroke-width="1.5" />
<line x1="487.3" y1="525.7" x2="493.4" y2="525.7" stroke="#68a84a" stroke-width="1.5" />
<rect x="493.5" y="493.9" width="82.79999999999995" height="23.899999999999977" rx="2.5" fill="#fff" stroke="#e2e2e2" stroke-width="1" />
<circle cx="502" cy="505.9" r="5.1" fill="#2a8a17" />
<path d="M 518.9 501.9 L 512.5 505.9 L 518.9 509.9 Z" fill="#222" />
<text x="523.6" y="509.0" font-size="9.92" fill="#333" textLength="33.9" lengthAdjust="spacingAndGlyphs" text-anchor="start" >ACTIVE</text>
<line x1="563.0" y1="505.9" x2="571.8" y2="505.9" stroke="#333" stroke-width="1.2" />
<line x1="567.4" y1="501.49999999999994" x2="567.4" y2="510.3" stroke="#333" stroke-width="1.2" />
<path d="M 561.8 505.9 L 564.1999999999999 503.7 L 564.1999999999999 508.09999999999997 Z M 573.0 505.9 L 570.6 503.7 L 570.6 508.09999999999997 Z M 567.4 500.29999999999995 L 565.1999999999999 502.69999999999993 L 569.6 502.69999999999993 Z M 567.4 511.5 L 565.1999999999999 509.1 L 569.6 509.1 Z" fill="#333" />
<line x1="492.5" y1="665.8" x2="1322.5" y2="665.8" stroke="#777" stroke-width="1.6" />
<line x1="493.2" y1="665" x2="493.2" y2="669" stroke="#777" stroke-width="1.3" />
<line x1="1321.8" y1="665" x2="1321.8" y2="669" stroke="#777" stroke-width="1.3" />
<line x1="577.4" y1="665" x2="577.4" y2="669" stroke="#777" stroke-width="1.3" />
<text x="577.4" y="679.9" font-size="10.20" fill="#333" textLength="29.4" lengthAdjust="spacingAndGlyphs" text-anchor="middle" >03 AM</text>
<line x1="681.05" y1="665" x2="681.05" y2="669" stroke="#777" stroke-width="1.3" />
<text x="681.0" y="679.9" font-size="10.20" fill="#333" textLength="29.4" lengthAdjust="spacingAndGlyphs" text-anchor="middle" >04 AM</text>
<line x1="784.7" y1="665" x2="784.7" y2="669" stroke="#777" stroke-width="1.3" />
<text x="784.7" y="679.9" font-size="10.20" fill="#333" textLength="29.4" lengthAdjust="spacingAndGlyphs" text-anchor="middle" >05 AM</text>
<line x1="888.35" y1="665" x2="888.35" y2="669" stroke="#777" stroke-width="1.3" />
<text x="888.4" y="679.9" font-size="10.20" fill="#333" textLength="29.4" lengthAdjust="spacingAndGlyphs" text-anchor="middle" >06 AM</text>
<line x1="992.0" y1="665" x2="992.0" y2="669" stroke="#777" stroke-width="1.3" />
<text x="992.0" y="679.9" font-size="10.20" fill="#333" textLength="29.4" lengthAdjust="spacingAndGlyphs" text-anchor="middle" >07 AM</text>
<line x1="1095.65" y1="665" x2="1095.65" y2="669" stroke="#777" stroke-width="1.3" />
<text x="1095.7" y="679.9" font-size="10.20" fill="#333" textLength="29.4" lengthAdjust="spacingAndGlyphs" text-anchor="middle" >08 AM</text>
<line x1="1199.3000000000002" y1="665" x2="1199.3000000000002" y2="669" stroke="#777" stroke-width="1.3" />
<text x="1199.3" y="679.9" font-size="10.20" fill="#333" textLength="29.4" lengthAdjust="spacingAndGlyphs" text-anchor="middle" >09 AM</text>
<line x1="1302.95" y1="665" x2="1302.95" y2="669" stroke="#777" stroke-width="1.3" />
<text x="1303.0" y="679.9" font-size="10.20" fill="#333" textLength="29.4" lengthAdjust="spacingAndGlyphs" text-anchor="middle" >10 AM</text>
<rect x="493.9" y="690.9" width="30.100000000000023" height="30.0" rx="3" fill="#fff" stroke="#dcdcdc" stroke-width="1" />
<path d="M 510.6 702.5 L 506.6 705.9 L 510.6 709.3 Z" fill="#333" />
<rect x="529.9" y="690.9" width="31.300000000000068" height="30.0" rx="3" fill="#fff" stroke="#dcdcdc" stroke-width="1" />
<rect x="538.2" y="699.5" width="14.6" height="13.6" rx="1.2" fill="none" stroke="#8a8a8a" stroke-width="1.2" />
<line x1="538.2" y1="702.6999999999999" x2="552.8" y2="702.6999999999999" stroke="#8a8a8a" stroke-width="1.2" />
<line x1="541.5" y1="697.5" x2="541.5" y2="700.6999999999999" stroke="#8a8a8a" stroke-width="1.3" />
<line x1="549.5" y1="697.5" x2="549.5" y2="700.6999999999999" stroke="#8a8a8a" stroke-width="1.3" />
<rect x="547.1" y="707.6999999999999" width="3.6" height="3.2" rx="0" fill="#8a8a8a" />
<rect x="566.6" y="690.9" width="31.399999999999977" height="30.0" rx="3" fill="#fff" stroke="#c8d2dc" stroke-width="1" />
<circle cx="582.3" cy="706" r="7.2" fill="none" stroke="#8a8a8a" stroke-width="1.2" />
<path d="M 582.3 701.7 V 706 H 585.9" fill="none" stroke="#8a8a8a" stroke-width="1.2" />
<rect x="820.8" y="690.9" width="30.300000000000068" height="30.0" rx="3" fill="#fff" stroke="#dcdcdc" stroke-width="1" />
<path d="M 828.4 699 V 714.6 H 843.7" fill="none" stroke="#555" stroke-width="1.2" />
<path d="M 830 706.5 Q 833 700.5 838 701.5 Q 841 701.8 842.5 699.5" fill="none" stroke="#555" stroke-width="1.2" />
<line x1="830" y1="704.8" x2="843" y2="704.8" stroke="#555" stroke-width="1.1" />
<path d="M 830.5 713 L 833 710.5 L 835 711 L 838 708.5 L 840 709 L 842 707" fill="none" stroke="#777" stroke-width="0.9" stroke-dasharray="1.5 1"/>
<rect x="856.9" y="691.0" width="101.10000000000002" height="30.0" rx="3" fill="#fff" stroke="#dcdcdc" stroke-width="1" />
<line x1="927.8" y1="691" x2="927.8" y2="721" stroke="#dcdcdc" stroke-width="1" />
<text x="869.2" y="711.4" font-size="12.85" fill="#333" textLength="45.8" lengthAdjust="spacingAndGlyphs" text-anchor="start" >8 hours</text>
<rect x="937.4" y="705.6" width="11.4" height="8.1" rx="1.5" fill="none" stroke="#555" stroke-width="1.6" />
<path d="M 939.8 705.6 V 702.8 A 3.4 3.4 0 0 1 946.4 701.7" fill="none" stroke="#555" stroke-width="1.6" />
<circle cx="943.1" cy="709.6" r="1.1" fill="#555" />
<rect x="964.1" y="691.0" width="30.0" height="30.0" rx="3" fill="#fff" stroke="#ececec" stroke-width="1" />
<path d="M 973.2 707 A 6 6 0 1 1 975 711.2" fill="none" stroke="#cfcfcf" stroke-width="1.3" />
<path d="M 971 705.6 L 973.2 708.6 L 975.6 705.8" fill="none" stroke="#cfcfcf" stroke-width="1.2" />
<path d="M 979.2 703.6 V 707.2 L 981.8 708.6" fill="none" stroke="#cfcfcf" stroke-width="1.2" />
<rect x="1221.7" y="690.9" width="31.399999999999864" height="30.0" rx="3" fill="#fff" stroke="#dcdcdc" stroke-width="1" />
<rect x="1230.1000000000001" y="699.5" width="14.6" height="13.6" rx="1.2" fill="none" stroke="#8a8a8a" stroke-width="1.2" />
<line x1="1230.1000000000001" y1="702.6999999999999" x2="1244.7" y2="702.6999999999999" stroke="#8a8a8a" stroke-width="1.2" />
<line x1="1233.4" y1="697.5" x2="1233.4" y2="700.6999999999999" stroke="#8a8a8a" stroke-width="1.3" />
<line x1="1241.4" y1="697.5" x2="1241.4" y2="700.6999999999999" stroke="#8a8a8a" stroke-width="1.3" />
<rect x="1239.0" y="707.6999999999999" width="3.6" height="3.2" rx="0" fill="#8a8a8a" />
<rect x="1258.5" y="690.9" width="31.40000000000009" height="30.0" rx="3" fill="#fff" stroke="#c8d2dc" stroke-width="1" />
<circle cx="1274.2" cy="706" r="7.2" fill="none" stroke="#8a8a8a" stroke-width="1.2" />
<path d="M 1274.2 701.7 V 706 H 1277.8" fill="none" stroke="#8a8a8a" stroke-width="1.2" />
<rect x="1291.2" y="690.9" width="30.200000000000045" height="30.0" rx="3" fill="#fff" stroke="#dcdcdc" stroke-width="1" />
<path d="M 1304.4 702.5 L 1308.4 705.9 L 1304.4 709.3 Z" fill="#333" />
<line x1="493" y1="729.5" x2="1322" y2="729.5" stroke="#e8e8e8" stroke-width="1" />
<path d="M 494.40 734.0 L 496.60 757.4 L 498.03 733.8 L 500.04 756.2 L 501.67 733.3 L 503.57 756.3 L 505.06 733.0 L 506.76 756.1 L 509.01 734.0 L 510.85 756.6 L 512.44 732.2 L 513.81 756.6 L 515.45 732.9 L 517.60 756.4 L 519.46 732.6 L 520.83 756.8 L 522.30 733.1 L 524.55 756.2 L 526.06 733.9 L 528.13 756.0 L 530.30 733.6 L 532.36 756.8 L 534.59 734.0 L 536.09 756.0 L 538.08 733.0 L 539.91 756.5 L 542.09 733.1 L 544.19 756.8 L 546.33 733.9 L 548.10 756.4 L 550.28 733.5 L 552.06 757.1 L 553.71 733.5 L 555.20 755.7 L 556.80 733.9 L 558.42 755.6 L 560.41 733.1 L 562.23 756.2 L 564.11 732.7 L 565.64 756.5 L 567.83 733.3 L 569.25 755.9 L 571.25 733.9 L 572.78 756.0 L 574.18 733.4 L 575.78 757.0 L 577.91 732.3 L 579.73 755.8 L 581.30 732.5 L 583.45 756.7 L 585.44 732.2 L 587.12 757.2 L 589.07 732.3 L 591.28 757.4 L 593.29 732.1 L 594.87 755.9 L 596.36 732.5 L 598.33 756.7 L 599.72 734.1 L 601.21 757.4 L 602.87 733.3 L 604.89 757.3 L 606.54 732.2 L 608.29 756.0 L 610.31 733.9 L 612.34 755.8 L 614.32 733.0 L 615.88 756.2 L 617.51 732.3 L 619.26 755.8 L 620.73 733.3 L 622.43 756.5 L 623.91 734.0 L 625.50 756.3 L 627.22 732.1 L 629.08 757.2 L 630.48 732.2 L 631.97 757.3 L 633.89 733.1 L 636.13 755.6 L 638.37 732.6 L 640.12 757.0 L 642.01 733.3 L 644.08 756.1 L 645.66 732.9 L 647.48 757.5 L 648.86 732.9 L 650.31 756.1 L 651.88 732.3 L 653.39 757.0 L 654.94 733.1 L 656.71 756.9 L 658.63 732.5 L 660.80 755.6 L 662.81 733.0 L 664.62 756.3 L 666.01 732.9 L 667.83 757.1 L 669.27 733.7 L 670.95 756.5 L 673.13 733.3 L 674.74 755.5 L 676.42 732.1 L 678.39 757.3 L 680.02 733.8 L 681.97 757.5 L 683.73 732.9 L 685.51 757.1 L 687.39 732.2 L 689.00 756.8 L 691.19 732.3 L 693.22 757.1 L 695.09 732.9 L 696.85 756.0 L 698.56 732.3 L 700.02 757.3 L 702.13 733.4 L 704.35 756.1 L 705.72 733.4 L 707.77 756.1 L 709.57 732.8 L 711.33 755.9 L 712.92 733.2 L 714.70 755.6 L 716.77 734.0 L 718.88 756.9 L 720.43 733.1 L 722.02 756.6 L 723.98 733.9 L 725.86 755.9 L 727.29 732.8 L 729.54 757.2 L 731.27 732.2 L 732.69 755.7 L 734.93 733.4 L 736.40 756.9 L 737.96 733.4 L 739.92 756.6 L 741.74 732.3 L 743.58 755.6 L 745.61 732.3 L 747.42 756.1 L 749.01 733.9 L 750.77 756.1 L 752.48 734.1 L 754.54 756.4 L 756.02 733.0 L 757.40 756.3 L 759.54 732.5 L 761.35 756.5 L 763.06 733.5 L 765.26 756.1 L 767.03 734.0 L 768.68 756.0 L 770.62 733.6 L 772.74 757.1 L 774.65 732.9 L 776.60 755.5 L 778.52 732.1 L 780.29 756.1 L 782.43 733.4 L 784.52 757.5 L 786.72 733.6 L 788.61 755.7 L 790.76 732.3 L 792.84 756.0 L 794.37 733.6 L 796.25 757.1 L 798.32 732.4 L 800.22 756.6 L 801.80 733.2 L 803.57 757.1 L 805.79 732.2 L 807.14 756.5 L 809.25 733.4 L 811.28 756.5 L 813.23 732.8 L 814.83 756.5 L 816.20 732.3 L 818.23 757.2 L 820.25 733.7 L 821.97 756.2 L 824.03 733.8 L 825.50 757.2 L 827.19 733.0 L 828.81 757.5 L 830.66 734.0 L 832.34 756.4 L 834.03 733.0 L 836.17 756.9 L 838.10 733.1 L 839.93 755.7 L 841.35 733.7 L 842.98 756.2 L 845.04 733.4 L 846.75 755.8 L 848.18 733.4 L 849.88 756.4 L 852.00 733.7 L 853.91 756.9 L 855.47 733.0 L 857.03 756.9 L 859.25 732.3 L 861.33 756.7 L 863.01 732.7 L 864.43 756.6 L 865.93 733.0 L 867.54 755.7 L 869.72 733.0 L 871.65 755.6 L 873.29 732.3 L 874.86 757.1 L 876.82 732.8 L 878.49 755.9 L 880.05 733.7 L 881.97 756.7 L 884.06 732.8 L 886.20 755.6 L 888.00 733.5 L 890.20 756.0 L 892.23 733.8 L 894.42 756.0 L 896.65 732.7 L 898.56 756.2 L 900.24 732.9 L 901.75 755.6 L 903.42 733.1 L 905.57 757.1 L 907.79 732.4 L 909.16 756.8 L 910.84 733.9 L 912.98 756.0 L 914.72 733.2 L 916.29 755.8 L 917.99 732.7 L 919.91 757.2 L 921.55 734.0 L 922.98 757.2 L 924.52 732.6 L 926.25 757.0 L 927.90 732.6 L 929.47 756.3 L 931.12 732.8 L 933.16 757.4 L 934.64 733.8 L 936.38 755.9 L 937.85 733.1 L 939.96 756.8 L 942.00 733.3 L 943.71 755.5 L 945.41 733.0 L 947.32 756.9 L 949.42 733.3 L 951.30 756.4 L 953.54 734.1 L 955.64 756.6 L 957.36 733.1 L 958.76 757.3 L 961.00 732.4 L 963.20 756.1 L 965.37 732.3 L 966.99 755.9 L 968.35 732.3 L 970.02 757.2 L 971.50 733.4 L 972.93 755.6 L 974.87 732.2 L 977.03 757.0 L 978.81 733.2 L 980.28 756.5 L 981.69 732.5 L 983.87 755.9 L 985.69 733.5 L 987.82 757.2 L 989.62 732.4 L 991.07 757.3 L 992.61 732.2 L 994.16 756.7 L 996.07 733.8 L 998.23 756.1 L 1000.04 733.9 L 1001.53 757.3 L 1003.62 733.4 L 1005.16 756.7 L 1006.78 733.0 L 1008.51 756.7 L 1010.58 733.7 L 1012.44 756.6 L 1014.04 733.6 L 1016.28 757.0 L 1018.26 733.5 L 1020.20 757.4 L 1022.05 732.5 L 1023.58 756.3 L 1025.51 733.4 L 1027.52 756.1 L 1029.30 732.2 L 1031.35 755.9 L 1033.45 733.3 L 1034.83 757.1 L 1036.28 733.4 L 1038.12 757.1 L 1040.33 734.1 L 1042.49 756.6 L 1044.10 732.5 L 1046.19 756.1 L 1047.79 733.9 L 1049.66 756.7 L 1051.38 733.5 L 1053.14 756.2 L 1054.60 733.5 L 1056.19 755.7 L 1057.74 732.8 L 1059.57 756.7 L 1061.40 733.9 L 1062.93 756.0 L 1064.90 733.7 L 1066.65 756.6 L 1068.31 733.0 L 1069.89 757.1 L 1071.67 732.5 L 1073.44 756.4 L 1075.07 732.4 L 1076.97 755.8 L 1078.52 733.3 L 1080.46 755.7 L 1082.42 732.7 L 1083.96 755.8 L 1085.58 732.1 L 1087.71 757.1 L 1089.35 732.7 L 1090.93 756.1 L 1092.58 733.0 L 1094.31 755.8 L 1095.68 733.3 L 1097.15 757.2 L 1099.04 732.9 L 1100.45 756.3 L 1102.62 733.4 L 1104.42 755.9 L 1106.59 732.4 L 1108.21 755.6 L 1110.40 732.5 L 1112.38 755.8 L 1114.26 733.5 L 1116.08 757.0 L 1117.63 732.2 L 1119.57 757.2 L 1121.48 732.9 L 1123.23 755.6 L 1124.93 733.0 L 1126.62 757.1 L 1128.17 733.2 L 1130.26 757.3 L 1132.46 733.4 L 1133.86 756.1 L 1135.57 733.1 L 1137.01 756.5 L 1138.83 733.7 L 1140.70 756.1 L 1142.71 732.5 L 1144.08 756.5 L 1145.55 732.4 L 1147.19 756.4 L 1149.09 733.4 L 1151.29 757.3 L 1153.15 732.3 L 1155.10 756.6 L 1156.57 732.7 L 1158.52 756.6 L 1160.72 732.8 L 1162.37 755.7 L 1164.27 732.3 L 1166.33 756.8 L 1168.53 733.4 L 1170.60 755.7 L 1172.41 734.0 L 1173.78 756.8 L 1175.89 732.1 L 1177.84 755.5 L 1179.84 733.8 L 1181.26 756.4 L 1183.16 733.0 L 1184.88 755.9 L 1186.38 732.2 L 1188.26 755.6 L 1190.36 733.4 L 1191.97 755.7 L 1193.36 732.6 L 1195.42 755.7 L 1197.13 733.9 L 1198.58 756.3 L 1199.99 732.6 L 1201.51 757.5 L 1203.23 733.1 L 1204.83 756.2 L 1206.23 733.1 L 1208.05 756.7 L 1210.23 732.4 L 1211.96 756.6 L 1213.64 734.0 L 1215.51 756.5 L 1217.26 733.0 L 1219.46 755.9 L 1221.39 732.4 L 1223.28 757.2 L 1224.95 732.1 L 1226.93 755.5 L 1228.85 733.2 L 1230.43 756.6 L 1232.20 732.9 L 1233.79 757.1 L 1235.82 734.0 L 1237.90 756.3 L 1239.28 732.7 L 1241.39 755.6 L 1243.23 733.2 L 1245.20 757.0 L 1247.19 732.8 L 1249.30 756.6 L 1251.25 733.2 L 1253.08 756.6 L 1255.28 733.6 L 1257.01 756.5 L 1259.17 733.6 L 1261.11 755.6 L 1262.56 733.3 L 1264.48 756.6 L 1266.69 734.0 L 1268.39 756.3 L 1270.43 733.5 L 1272.11 755.9 L 1273.77 732.4 L 1275.72 756.2 L 1277.44 733.1 L 1279.68 755.9 L 1281.39 733.9 L 1283.26 756.7 L 1285.19 733.7 L 1287.35 756.2 L 1289.30 732.9 L 1290.68 756.6 L 1292.14 734.0 L 1293.81 756.3 L 1295.82 732.5 L 1297.92 756.8 L 1299.35 733.3 L 1301.06 755.7 L 1302.81 732.3 L 1304.17 757.4 L 1305.97 733.5 L 1307.36 756.8 L 1309.15 733.9 L 1311.37 755.7 L 1313.29 733.3 L 1314.84 756.3 L 1316.34 732.7 L 1318.44 756.4 L 1320.44 733.0" fill="none" stroke="#ff7f4a" stroke-width="1.4" opacity="1.0"/>
<path d="M 495.70 734.0 L 497.54 754.5 L 499.43 737.1 L 500.84 757.4 L 502.95 734.2 L 504.51 749.5 L 506.28 738.8 L 508.06 752.4 L 509.54 737.2 L 511.68 753.3 L 513.69 737.5 L 515.10 751.4 L 516.98 734.5 L 518.36 750.6 L 520.14 737.9 L 522.28 751.8 L 524.46 735.3 L 526.53 753.9 L 528.72 739.1 L 530.16 756.4 L 531.70 739.8 L 533.44 752.5 L 535.07 736.2 L 536.76 754.7 L 538.64 736.8 L 540.80 752.0 L 542.99 739.0 L 545.23 752.1 L 546.73 739.0 L 548.95 750.3 L 550.81 737.8 L 552.35 750.8 L 554.21 734.4 L 555.62 750.7 L 557.86 732.8 L 559.93 754.2 L 561.42 734.5 L 563.46 750.5 L 564.85 737.0 L 566.24 751.8 L 567.89 739.1 L 570.12 753.5 L 572.37 734.6 L 573.79 752.7 L 575.17 733.7 L 576.88 752.6 L 578.37 732.4 L 580.51 755.0 L 582.72 739.3 L 584.41 753.8 L 586.23 737.3 L 588.11 753.0 L 590.02 739.6 L 591.83 754.1 L 593.83 734.0 L 595.45 749.7 L 597.27 736.5 L 598.63 754.2 L 600.50 732.3 L 602.40 752.4 L 603.81 737.1 L 605.58 752.1 L 607.24 737.8 L 609.26 757.3 L 610.66 737.5 L 612.88 755.5 L 614.64 736.8 L 616.28 754.6 L 617.91 735.1 L 619.79 755.1 L 621.48 738.3 L 622.86 752.9 L 624.87 734.6 L 626.42 751.1 L 627.99 733.6 L 629.73 751.9 L 631.17 734.7 L 632.82 750.8 L 634.56 738.9 L 636.07 754.8 L 638.00 739.2 L 639.76 755.7 L 641.22 736.3 L 642.74 751.0 L 644.84 733.6 L 646.44 751.0 L 648.37 738.6 L 650.03 756.5 L 651.64 738.5 L 653.24 754.7 L 654.96 735.5 L 656.68 750.1 L 658.17 732.1 L 660.37 750.5 L 662.61 735.6 L 664.81 750.1 L 666.36 738.1 L 668.47 752.2 L 670.28 734.4 L 671.94 755.7 L 673.35 736.8 L 674.96 751.0 L 676.35 739.3 L 678.33 750.1 L 680.48 739.3 L 682.35 757.4 L 684.37 733.5 L 685.99 752.2 L 687.82 735.4 L 690.01 752.6 L 691.67 734.1 L 693.79 753.7 L 695.85 734.9 L 697.38 753.2 L 699.46 733.5 L 701.52 750.1 L 703.60 738.7 L 704.95 752.5 L 707.08 732.5 L 708.68 755.4 L 710.50 735.5 L 712.28 751.3 L 713.63 732.5 L 715.09 756.5 L 716.50 739.9 L 718.62 756.8 L 720.42 734.6 L 722.06 754.7 L 723.99 736.8 L 725.66 756.0 L 727.31 733.1 L 729.16 751.8 L 730.85 732.7 L 732.36 754.5 L 734.26 738.4 L 735.95 751.1 L 737.86 735.6 L 739.54 753.5 L 741.53 735.5 L 743.50 753.8 L 745.07 736.4 L 747.05 756.9 L 748.78 735.5 L 750.92 750.0 L 752.61 739.3 L 754.67 755.4 L 756.44 733.1 L 758.52 752.2 L 760.67 738.4 L 762.62 751.6 L 764.48 732.9 L 766.36 757.5 L 767.84 738.3 L 769.23 756.8 L 770.66 739.1 L 772.18 757.3 L 774.28 733.1 L 776.39 752.1 L 778.50 739.7 L 780.37 751.1 L 781.75 738.2 L 783.56 751.8 L 785.01 738.1 L 787.20 757.0 L 788.84 736.6 L 790.93 755.6 L 792.45 734.1 L 794.35 751.5 L 796.05 735.0 L 797.76 754.7 L 799.49 732.8 L 801.29 749.7 L 803.01 738.1 L 804.50 752.0 L 806.53 737.5 L 808.35 753.6 L 810.28 739.3 L 811.76 756.7 L 813.79 739.4 L 815.60 754.0 L 817.60 733.6 L 819.19 755.9 L 821.07 734.6 L 822.63 752.0 L 824.83 734.5 L 826.82 754.2 L 828.94 736.8 L 830.53 755.8 L 831.90 735.9 L 833.59 756.1 L 835.27 734.7 L 837.31 756.4 L 839.56 735.9 L 841.45 753.8 L 843.55 738.7 L 845.40 753.6 L 847.40 739.0 L 849.11 751.6 L 851.32 735.8 L 852.88 755.6 L 854.87 737.5 L 857.09 750.7 L 858.65 733.6 L 860.24 756.0 L 862.22 739.0 L 864.38 755.5 L 866.51 734.6 L 868.24 751.7 L 869.67 732.8 L 871.77 755.2 L 873.44 736.7 L 875.40 757.4 L 877.05 735.6 L 878.84 755.8 L 880.71 739.7 L 882.41 753.1 L 883.87 734.3 L 885.82 756.6 L 887.97 739.4 L 889.41 750.0 L 891.09 738.3 L 893.12 755.1 L 895.08 737.3 L 897.16 755.4 L 899.19 739.8 L 901.14 753.2 L 902.59 736.1 L 904.26 751.8 L 906.22 736.6 L 907.74 752.3 L 909.65 733.5 L 911.80 752.3 L 913.27 739.6 L 914.74 754.8 L 916.74 736.9 L 918.59 752.3 L 920.35 734.6 L 921.86 757.0 L 923.86 738.1 L 925.69 751.6 L 927.37 734.2 L 929.06 750.5 L 930.45 736.1 L 932.02 751.3 L 933.69 734.8 L 935.40 753.2 L 937.45 734.9 L 939.56 756.6 L 941.15 732.9 L 942.61 751.3 L 944.61 733.6 L 946.13 754.2 L 948.15 738.6 L 950.17 752.8 L 951.66 735.3 L 953.18 753.3 L 955.04 733.7 L 956.62 751.2 L 957.99 738.5 L 960.15 749.9 L 961.84 736.5 L 963.72 752.4 L 965.94 737.6 L 967.56 750.6 L 969.35 736.9 L 971.35 757.5 L 973.40 737.4 L 975.19 753.3 L 976.95 733.6 L 978.78 757.2 L 980.58 737.3 L 982.33 753.0 L 984.54 739.2 L 986.02 751.2 L 987.93 732.5 L 989.60 755.6 L 991.02 736.4 L 993.21 754.9 L 995.34 737.7 L 996.81 750.6 L 998.70 739.5 L 1000.70 751.6 L 1002.36 738.6 L 1004.55 750.6 L 1006.29 738.2 L 1008.08 756.6 L 1009.46 732.7 L 1010.99 756.2 L 1012.79 737.7 L 1014.63 754.1 L 1016.56 734.5 L 1018.33 751.4 L 1020.04 733.5 L 1022.20 751.7 L 1023.88 735.1 L 1025.71 752.7 L 1027.26 732.1 L 1028.79 751.2 L 1030.27 735.8 L 1031.80 755.8 L 1033.30 735.3 L 1034.80 757.3 L 1036.25 733.4 L 1038.05 757.0 L 1039.42 735.7 L 1041.13 751.9 L 1042.53 735.3 L 1044.24 757.3 L 1046.45 733.9 L 1047.89 753.7 L 1049.39 737.1 L 1051.05 756.5 L 1052.45 737.9 L 1054.04 751.2 L 1055.81 739.6 L 1057.43 755.5 L 1059.02 738.6 L 1060.94 754.7 L 1062.37 737.6 L 1064.59 752.8 L 1065.95 732.3 L 1067.38 756.1 L 1068.76 732.5 L 1070.70 750.3 L 1072.23 739.9 L 1074.01 751.1 L 1076.19 739.6 L 1077.57 755.1 L 1079.46 739.7 L 1080.89 755.2 L 1083.01 733.0 L 1084.71 754.8 L 1086.67 739.5 L 1088.18 751.6 L 1090.19 738.8 L 1092.04 750.1 L 1093.71 735.4 L 1095.27 751.3 L 1097.05 734.3 L 1098.55 751.7 L 1100.45 737.8 L 1102.15 753.6 L 1103.64 737.8 L 1105.01 753.8 L 1107.04 737.5 L 1108.48 755.6 L 1110.59 737.2 L 1112.73 750.5 L 1114.48 739.3 L 1116.49 754.8 L 1118.17 732.7 L 1119.88 749.9 L 1121.33 736.7 L 1122.78 756.9 L 1124.71 734.0 L 1126.11 756.3 L 1128.04 736.8 L 1129.40 755.7 L 1131.62 733.9 L 1133.47 754.1 L 1135.53 736.9 L 1137.59 753.2 L 1139.11 733.5 L 1140.53 750.9 L 1141.98 732.3 L 1144.20 755.9 L 1146.35 732.8 L 1148.12 755.7 L 1150.22 737.0 L 1152.14 751.4 L 1154.28 734.9 L 1156.17 753.9 L 1157.62 738.8 L 1159.51 751.0 L 1161.04 736.4 L 1162.81 751.7 L 1164.23 734.9 L 1166.02 756.9 L 1167.86 738.0 L 1169.59 752.3 L 1171.49 733.8 L 1173.15 749.5 L 1174.81 735.5 L 1176.23 755.8 L 1177.73 739.5 L 1179.73 750.5 L 1181.97 737.0 L 1184.16 753.2 L 1185.89 739.7 L 1188.05 749.9 L 1189.84 738.3 L 1191.55 749.5 L 1193.73 734.4 L 1195.92 756.0 L 1197.36 737.9 L 1198.97 753.3 L 1200.90 732.4 L 1202.92 755.3 L 1204.66 734.9 L 1206.68 751.5 L 1208.28 732.9 L 1209.90 754.2 L 1211.32 733.3 L 1213.36 751.9 L 1215.59 739.9 L 1217.73 754.5 L 1219.22 734.6 L 1220.99 753.3 L 1222.83 735.0 L 1224.94 755.2 L 1226.71 739.2 L 1228.79 755.1 L 1230.36 738.6 L 1231.71 756.4 L 1233.54 736.4 L 1235.04 757.1 L 1236.58 738.3 L 1238.34 749.7 L 1240.40 739.9 L 1241.78 756.0 L 1243.14 735.6 L 1244.80 757.1 L 1246.64 732.9 L 1248.27 755.5 L 1250.34 735.4 L 1251.93 757.1 L 1253.66 737.1 L 1255.62 750.2 L 1257.70 734.1 L 1259.17 751.4 L 1261.23 736.2 L 1263.33 753.1 L 1264.93 733.4 L 1266.30 752.4 L 1268.45 739.3 L 1270.22 752.2 L 1272.41 738.6 L 1274.30 754.2 L 1276.12 733.5 L 1277.63 752.0 L 1279.88 736.5 L 1281.59 754.7 L 1283.35 738.5 L 1285.11 749.8 L 1286.60 734.6 L 1288.42 754.2 L 1290.54 738.7 L 1292.72 752.6 L 1294.10 736.7 L 1295.95 753.6 L 1297.55 737.8 L 1299.72 756.7 L 1301.67 735.1 L 1303.48 750.3 L 1305.70 737.2 L 1307.22 750.1 L 1308.74 735.2 L 1310.83 755.0 L 1312.43 739.7 L 1314.63 755.0 L 1316.33 734.4 L 1317.80 755.5 L 1320.03 732.7" fill="none" stroke="#e26a90" stroke-width="0.8" opacity="0.45"/>
<path d="M 495.10 734.0 L 496.54 754.3 L 498.03 732.6 L 499.74 750.2 L 501.81 738.2 L 503.36 753.2 L 504.96 733.5 L 506.41 755.8 L 508.59 738.7 L 510.67 751.1 L 512.19 734.6 L 514.11 751.6 L 516.23 739.1 L 517.65 752.7 L 519.61 736.1 L 521.12 753.7 L 522.55 739.6 L 524.68 753.1 L 526.30 739.4 L 528.16 750.4 L 530.28 736.2 L 532.00 752.7 L 533.74 733.4 L 535.36 751.0 L 536.75 732.5 L 538.66 755.3 L 540.50 735.9 L 542.15 749.5 L 543.68 735.4 L 545.21 752.4 L 546.81 734.9 L 548.83 754.9 L 550.69 739.3 L 552.13 757.0 L 553.68 738.2 L 555.59 755.6 L 557.24 733.5 L 559.00 757.2 L 560.98 739.3 L 563.19 751.6 L 565.40 732.2 L 567.01 749.8 L 569.06 735.4 L 571.26 752.5 L 573.34 734.4 L 574.86 753.9 L 576.34 735.2 L 578.55 754.8 L 579.91 732.5 L 581.41 751.2 L 583.09 734.4 L 584.53 749.6 L 586.26 733.8 L 587.66 757.1 L 589.16 737.5 L 590.65 757.2 L 592.44 734.1 L 594.69 756.5 L 596.52 738.3 L 598.23 749.6 L 600.01 734.0 L 601.73 757.2 L 603.46 734.1 L 605.61 750.9 L 607.41 732.4 L 608.99 755.6 L 610.53 734.0 L 612.66 756.4 L 614.06 739.5 L 615.92 749.6 L 617.63 739.3 L 619.57 751.2 L 621.59 736.1 L 623.02 755.8 L 625.16 739.3 L 627.34 754.8 L 629.28 738.5 L 631.21 751.0 L 633.03 737.3 L 635.00 755.4 L 637.18 739.8 L 638.60 749.7 L 640.81 737.4 L 642.20 750.3 L 643.67 739.8 L 645.62 757.0 L 647.12 737.2 L 648.98 751.5 L 651.17 733.8 L 652.52 750.1 L 653.88 739.1 L 655.34 751.0 L 657.39 739.1 L 659.24 750.5 L 660.77 737.5 L 662.42 750.4 L 664.46 735.9 L 666.29 757.3 L 667.67 736.9 L 669.46 750.6 L 671.35 733.2 L 673.03 751.4 L 674.85 732.2 L 676.95 750.9 L 678.38 736.4 L 680.07 751.2 L 681.70 734.0 L 683.49 749.8 L 684.93 733.0 L 686.84 750.4 L 688.65 735.6 L 690.77 751.3 L 692.18 739.2 L 693.71 755.1 L 695.81 735.5 L 697.88 756.2 L 700.01 733.5 L 701.50 753.5 L 703.15 736.4 L 705.32 751.8 L 706.67 734.6 L 708.51 753.6 L 710.51 736.0 L 711.92 755.5 L 714.04 735.0 L 716.08 749.6 L 717.99 737.5 L 719.89 755.0 L 722.06 735.8 L 724.23 755.1 L 726.36 738.4 L 728.26 754.0 L 729.74 738.3 L 731.42 752.2 L 732.89 732.8 L 734.37 751.0 L 735.88 739.3 L 737.56 752.9 L 739.23 737.1 L 740.66 754.3 L 742.85 733.5 L 744.79 754.9 L 746.41 732.3 L 747.78 749.9 L 749.88 738.5 L 751.95 749.9 L 753.45 736.8 L 755.24 752.9 L 757.44 738.2 L 759.66 756.6 L 761.59 737.5 L 763.62 752.6 L 765.71 734.5 L 767.90 754.3 L 769.79 739.3 L 771.77 755.0 L 773.33 734.7 L 775.24 749.5 L 777.40 735.3 L 779.11 751.0 L 780.72 735.4 L 782.08 756.0 L 783.92 737.6 L 785.82 754.6 L 788.02 737.1 L 789.51 757.0 L 791.74 740.0 L 793.92 752.7 L 795.55 732.8 L 797.13 755.7 L 799.32 739.2 L 801.37 756.3 L 802.93 734.5 L 805.14 756.2 L 807.20 737.5 L 809.04 749.8 L 810.63 736.3 L 812.12 756.7 L 813.50 734.6 L 814.96 757.0 L 817.20 734.4 L 819.35 751.9 L 821.36 737.3 L 823.57 750.5 L 825.56 736.6 L 827.54 751.7 L 829.38 736.1 L 830.87 750.7 L 832.66 732.6 L 834.16 750.5 L 835.74 735.2 L 837.70 750.6 L 839.35 735.2 L 841.08 757.3 L 843.22 732.3 L 845.43 756.3 L 846.93 738.9 L 849.02 755.6 L 850.86 735.9 L 852.86 756.0 L 854.95 740.1 L 856.94 750.1 L 859.13 735.1 L 861.25 750.8 L 863.12 733.0 L 865.03 750.2 L 866.66 737.3 L 868.81 752.7 L 870.20 737.2 L 871.78 750.6 L 873.72 734.6 L 875.88 752.5 L 877.53 738.8 L 879.69 750.4 L 881.83 737.4 L 883.81 752.7 L 885.64 740.0 L 887.30 756.8 L 889.30 736.1 L 891.14 752.7 L 892.71 733.7 L 894.13 751.2 L 896.29 737.7 L 897.75 749.7 L 899.84 736.2 L 901.19 750.7 L 903.10 737.1 L 904.47 751.6 L 905.85 735.9 L 907.33 754.6 L 909.48 738.1 L 911.57 755.1 L 913.27 736.9 L 914.65 754.2 L 916.87 738.1 L 919.00 755.1 L 920.97 738.4 L 922.96 754.0 L 924.46 732.2 L 926.61 750.0 L 928.21 738.1 L 929.93 752.5 L 932.03 734.7 L 933.94 755.5 L 935.75 732.3 L 937.34 755.2 L 939.51 733.2 L 941.55 756.8 L 943.78 733.4 L 945.22 755.8 L 947.41 737.5 L 949.56 753.5 L 951.01 734.8 L 952.77 749.6 L 954.27 734.1 L 956.38 756.6 L 958.60 734.5 L 960.46 752.2 L 962.63 732.7 L 964.74 756.1 L 966.74 732.3 L 968.78 756.1 L 970.31 732.4 L 971.96 754.9 L 974.19 737.0 L 975.87 749.6 L 977.37 733.8 L 979.58 749.9 L 981.55 739.9 L 982.95 750.3 L 984.94 737.4 L 987.04 756.7 L 988.57 733.2 L 990.35 753.1 L 992.19 735.0 L 994.21 750.8 L 996.24 732.4 L 997.73 755.7 L 999.30 736.7 L 1000.82 752.5 L 1002.48 735.0 L 1004.47 749.9 L 1005.99 734.9 L 1008.22 755.8 L 1009.60 733.6 L 1011.69 751.6 L 1013.88 736.1 L 1015.27 755.1 L 1017.27 735.2 L 1018.74 754.5 L 1020.51 734.9 L 1022.26 756.4 L 1023.64 738.4 L 1025.65 754.2 L 1027.10 734.5 L 1028.95 750.3 L 1030.74 739.9 L 1032.56 756.1 L 1034.47 736.9 L 1036.36 751.7 L 1037.73 735.6 L 1039.80 756.4 L 1041.18 733.6 L 1042.79 754.0 L 1044.42 737.2 L 1045.93 754.7 L 1047.89 736.5 L 1050.10 750.0 L 1051.68 734.8 L 1053.51 753.1 L 1055.19 739.0 L 1056.72 753.7 L 1058.18 739.2 L 1060.07 749.6 L 1061.54 737.8 L 1063.43 757.1 L 1065.52 739.1 L 1066.94 750.0 L 1069.00 736.9 L 1070.84 755.4 L 1072.24 735.9 L 1074.37 755.8 L 1076.14 734.4 L 1078.12 749.8 L 1080.26 734.4 L 1081.99 757.5 L 1083.82 738.9 L 1085.93 756.9 L 1087.67 732.7 L 1089.40 750.2 L 1091.00 738.9 L 1093.21 751.0 L 1094.75 739.4 L 1096.93 749.5 L 1098.29 732.1 L 1099.90 753.4 L 1101.63 732.8 L 1103.56 752.2 L 1105.47 736.2 L 1107.32 752.0 L 1108.73 735.6 L 1110.20 756.7 L 1112.23 734.7 L 1113.89 755.3 L 1115.77 733.0 L 1117.69 756.9 L 1119.90 733.4 L 1121.95 753.1 L 1123.68 734.5 L 1125.35 751.4 L 1127.17 736.4 L 1128.75 752.5 L 1130.25 736.0 L 1132.19 753.1 L 1134.06 736.7 L 1135.58 749.8 L 1137.55 737.9 L 1139.76 753.9 L 1141.41 734.5 L 1143.04 755.1 L 1144.68 733.8 L 1146.46 755.2 L 1148.14 737.4 L 1149.78 750.6 L 1151.85 734.7 L 1153.95 756.1 L 1155.38 740.1 L 1156.76 757.5 L 1158.89 732.1 L 1160.83 753.1 L 1162.38 734.1 L 1164.60 754.4 L 1166.17 735.6 L 1168.18 755.2 L 1169.61 738.4 L 1171.05 757.1 L 1172.40 740.0 L 1174.14 751.6 L 1175.99 739.9 L 1177.65 754.7 L 1179.62 732.1 L 1181.29 751.4 L 1183.16 736.0 L 1185.35 754.0 L 1187.36 735.2 L 1188.79 754.4 L 1190.33 732.3 L 1191.93 756.5 L 1193.70 738.0 L 1195.73 750.4 L 1197.36 737.5 L 1199.51 754.3 L 1201.69 732.9 L 1203.86 750.5 L 1206.10 738.7 L 1208.09 754.0 L 1210.08 739.1 L 1211.95 752.5 L 1214.13 734.4 L 1215.78 757.2 L 1217.92 737.1 L 1219.88 755.6 L 1221.40 735.9 L 1223.53 754.7 L 1225.26 735.4 L 1227.37 756.5 L 1229.50 732.2 L 1231.48 751.4 L 1233.26 738.0 L 1234.86 756.4 L 1236.53 734.2 L 1238.53 753.0 L 1240.47 739.9 L 1242.52 751.2 L 1244.74 739.5 L 1246.76 754.7 L 1248.57 738.1 L 1250.62 750.3 L 1252.64 737.5 L 1254.22 752.5 L 1255.74 737.3 L 1257.25 757.4 L 1259.46 739.1 L 1261.08 757.1 L 1263.17 738.3 L 1264.66 751.0 L 1266.76 736.7 L 1268.36 757.0 L 1269.77 735.6 L 1271.77 752.4 L 1273.32 738.5 L 1274.72 752.6 L 1276.23 732.1 L 1277.76 751.1 L 1279.30 732.2 L 1281.09 754.7 L 1282.95 736.7 L 1284.94 750.2 L 1286.60 737.2 L 1288.05 755.5 L 1289.49 739.0 L 1291.14 751.8 L 1293.28 735.2 L 1294.82 755.5 L 1296.61 735.2 L 1298.02 750.7 L 1299.95 739.1 L 1302.06 751.7 L 1304.15 737.7 L 1305.89 750.9 L 1308.06 733.0 L 1309.54 756.1 L 1311.30 739.0 L 1313.13 750.7 L 1314.81 736.6 L 1316.38 752.4 L 1317.97 732.2 L 1319.68 753.0" fill="none" stroke="#5a72a0" stroke-width="0.8" opacity="0.45"/>
<path d="M 493.5 730.6 L 1320.5 730.6 M 494.00 730.6 L 494.00 759.0 M 497.46 730.6 L 497.46 759.0 L 500.46 759.0 M 501.46 730.6 L 501.46 759.0 L 504.46 759.0 M 505.06 730.6 L 505.06 759.0 M 508.21 730.6 L 508.21 759.0 M 511.94 730.6 L 511.94 759.0 L 514.94 759.0 M 515.40 730.6 L 515.40 759.0 M 518.95 730.6 L 518.95 759.0 M 522.18 730.6 L 522.18 759.0 L 525.18 759.0 M 525.36 730.6 L 525.36 759.0 M 529.42 730.6 L 529.42 759.0 M 533.32 730.6 L 533.32 759.0 M 537.18 730.6 L 537.18 759.0 L 540.18 759.0 M 540.56 730.6 L 540.56 759.0 M 544.40 730.6 L 544.40 759.0 M 547.56 730.6 L 547.56 759.0 L 550.56 759.0 M 550.84 730.6 L 550.84 759.0 L 553.84 759.0 M 554.78 730.6 L 554.78 759.0 L 557.78 759.0 M 558.79 730.6 L 558.79 759.0 M 561.91 730.6 L 561.91 759.0 M 565.50 730.6 L 565.50 759.0 L 568.50 759.0 M 569.02 730.6 L 569.02 759.0 M 572.20 730.6 L 572.20 759.0 M 575.39 730.6 L 575.39 759.0 M 579.42 730.6 L 579.42 759.0 L 582.42 759.0 M 582.49 730.6 L 582.49 759.0 L 585.49 759.0 M 586.13 730.6 L 586.13 759.0 L 589.13 759.0 M 589.28 730.6 L 589.28 759.0 M 593.34 730.6 L 593.34 759.0 M 596.83 730.6 L 596.83 759.0 M 599.99 730.6 L 599.99 759.0 M 603.24 730.6 L 603.24 759.0 M 607.33 730.6 L 607.33 759.0 L 610.33 759.0 M 610.99 730.6 L 610.99 759.0 M 614.21 730.6 L 614.21 759.0 L 617.21 759.0 M 618.35 730.6 L 618.35 759.0 M 621.54 730.6 L 621.54 759.0 M 625.62 730.6 L 625.62 759.0 L 628.62 759.0 M 629.34 730.6 L 629.34 759.0 L 632.34 759.0 M 632.80 730.6 L 632.80 759.0 M 636.50 730.6 L 636.50 759.0 M 639.65 730.6 L 639.65 759.0 M 643.64 730.6 L 643.64 759.0 M 647.19 730.6 L 647.19 759.0 M 651.32 730.6 L 651.32 759.0 M 654.40 730.6 L 654.40 759.0 M 657.81 730.6 L 657.81 759.0 M 661.10 730.6 L 661.10 759.0 M 664.51 730.6 L 664.51 759.0 L 667.51 759.0 M 668.25 730.6 L 668.25 759.0 L 671.25 759.0 M 672.16 730.6 L 672.16 759.0 L 675.16 759.0 M 676.06 730.6 L 676.06 759.0 M 679.66 730.6 L 679.66 759.0 M 682.99 730.6 L 682.99 759.0 M 686.51 730.6 L 686.51 759.0 L 689.51 759.0 M 690.61 730.6 L 690.61 759.0 M 694.07 730.6 L 694.07 759.0 M 697.53 730.6 L 697.53 759.0 M 700.77 730.6 L 700.77 759.0 M 704.11 730.6 L 704.11 759.0 L 707.11 759.0 M 708.23 730.6 L 708.23 759.0 L 711.23 759.0 M 712.31 730.6 L 712.31 759.0 M 716.02 730.6 L 716.02 759.0 L 719.02 759.0 M 719.15 730.6 L 719.15 759.0 L 722.15 759.0 M 722.63 730.6 L 722.63 759.0 M 726.73 730.6 L 726.73 759.0 M 729.95 730.6 L 729.95 759.0 M 733.15 730.6 L 733.15 759.0 L 736.15 759.0 M 736.81 730.6 L 736.81 759.0 M 739.95 730.6 L 739.95 759.0 M 743.77 730.6 L 743.77 759.0 M 747.24 730.6 L 747.24 759.0 M 750.48 730.6 L 750.48 759.0 M 754.38 730.6 L 754.38 759.0 M 757.97 730.6 L 757.97 759.0 L 760.97 759.0 M 761.08 730.6 L 761.08 759.0 M 764.33 730.6 L 764.33 759.0 M 767.48 730.6 L 767.48 759.0 M 770.78 730.6 L 770.78 759.0 L 773.78 759.0 M 774.03 730.6 L 774.03 759.0 M 777.69 730.6 L 777.69 759.0 M 780.94 730.6 L 780.94 759.0 M 785.02 730.6 L 785.02 759.0 M 789.10 730.6 L 789.10 759.0 L 792.10 759.0 M 793.23 730.6 L 793.23 759.0 M 796.88 730.6 L 796.88 759.0 M 800.52 730.6 L 800.52 759.0 M 803.65 730.6 L 803.65 759.0 M 807.30 730.6 L 807.30 759.0 M 811.14 730.6 L 811.14 759.0 M 814.31 730.6 L 814.31 759.0 M 817.86 730.6 L 817.86 759.0 M 821.61 730.6 L 821.61 759.0 L 824.61 759.0 M 825.32 730.6 L 825.32 759.0 M 829.33 730.6 L 829.33 759.0 L 832.33 759.0 M 833.28 730.6 L 833.28 759.0 M 837.01 730.6 L 837.01 759.0 M 840.11 730.6 L 840.11 759.0 M 843.83 730.6 L 843.83 759.0 M 847.33 730.6 L 847.33 759.0 L 850.33 759.0 M 850.60 730.6 L 850.60 759.0 M 853.85 730.6 L 853.85 759.0 L 856.85 759.0 M 857.30 730.6 L 857.30 759.0 M 860.93 730.6 L 860.93 759.0 L 863.93 759.0 M 864.83 730.6 L 864.83 759.0 M 868.74 730.6 L 868.74 759.0 L 871.74 759.0 M 872.83 730.6 L 872.83 759.0 M 876.94 730.6 L 876.94 759.0 M 880.90 730.6 L 880.90 759.0 L 883.90 759.0 M 884.34 730.6 L 884.34 759.0 L 887.34 759.0 M 888.24 730.6 L 888.24 759.0 L 891.24 759.0 M 891.54 730.6 L 891.54 759.0 L 894.54 759.0 M 894.73 730.6 L 894.73 759.0 M 898.84 730.6 L 898.84 759.0 M 902.70 730.6 L 902.70 759.0 M 906.33 730.6 L 906.33 759.0 M 910.07 730.6 L 910.07 759.0 L 913.07 759.0 M 913.41 730.6 L 913.41 759.0 M 916.68 730.6 L 916.68 759.0 M 920.76 730.6 L 920.76 759.0 L 923.76 759.0 M 923.93 730.6 L 923.93 759.0 M 927.06 730.6 L 927.06 759.0 L 930.06 759.0 M 931.04 730.6 L 931.04 759.0 M 934.34 730.6 L 934.34 759.0 L 937.34 759.0 M 937.69 730.6 L 937.69 759.0 M 941.62 730.6 L 941.62 759.0 M 945.53 730.6 L 945.53 759.0 M 949.59 730.6 L 949.59 759.0 M 953.64 730.6 L 953.64 759.0 M 956.81 730.6 L 956.81 759.0 M 960.13 730.6 L 960.13 759.0 M 963.72 730.6 L 963.72 759.0 M 967.69 730.6 L 967.69 759.0 M 970.97 730.6 L 970.97 759.0 L 973.97 759.0 M 974.53 730.6 L 974.53 759.0 M 978.21 730.6 L 978.21 759.0 M 981.47 730.6 L 981.47 759.0 M 984.88 730.6 L 984.88 759.0 L 987.88 759.0 M 988.53 730.6 L 988.53 759.0 L 991.53 759.0 M 992.35 730.6 L 992.35 759.0 M 995.56 730.6 L 995.56 759.0 M 998.99 730.6 L 998.99 759.0 M 1002.70 730.6 L 1002.70 759.0 M 1006.72 730.6 L 1006.72 759.0 M 1010.01 730.6 L 1010.01 759.0 M 1013.43 730.6 L 1013.43 759.0 L 1016.43 759.0 M 1017.08 730.6 L 1017.08 759.0 M 1021.08 730.6 L 1021.08 759.0 M 1025.04 730.6 L 1025.04 759.0 M 1028.21 730.6 L 1028.21 759.0 M 1031.58 730.6 L 1031.58 759.0 M 1034.71 730.6 L 1034.71 759.0 L 1037.71 759.0 M 1038.77 730.6 L 1038.77 759.0 L 1041.77 759.0 M 1041.99 730.6 L 1041.99 759.0 L 1044.99 759.0 M 1045.15 730.6 L 1045.15 759.0 M 1049.29 730.6 L 1049.29 759.0 M 1052.77 730.6 L 1052.77 759.0 M 1056.38 730.6 L 1056.38 759.0 L 1059.38 759.0 M 1060.19 730.6 L 1060.19 759.0 M 1063.54 730.6 L 1063.54 759.0 M 1067.01 730.6 L 1067.01 759.0 L 1070.01 759.0 M 1070.74 730.6 L 1070.74 759.0 M 1074.41 730.6 L 1074.41 759.0 L 1077.41 759.0 M 1078.21 730.6 L 1078.21 759.0 L 1081.21 759.0 M 1081.79 730.6 L 1081.79 759.0 M 1085.58 730.6 L 1085.58 759.0 M 1089.45 730.6 L 1089.45 759.0 L 1092.45 759.0 M 1092.67 730.6 L 1092.67 759.0 M 1096.46 730.6 L 1096.46 759.0 L 1099.46 759.0 M 1099.88 730.6 L 1099.88 759.0 M 1103.32 730.6 L 1103.32 759.0 M 1106.97 730.6 L 1106.97 759.0 M 1110.05 730.6 L 1110.05 759.0 L 1113.05 759.0 M 1113.95 730.6 L 1113.95 759.0 M 1117.12 730.6 L 1117.12 759.0 L 1120.12 759.0 M 1120.41 730.6 L 1120.41 759.0 M 1124.44 730.6 L 1124.44 759.0 L 1127.44 759.0 M 1127.72 730.6 L 1127.72 759.0 M 1131.24 730.6 L 1131.24 759.0 M 1135.38 730.6 L 1135.38 759.0 M 1139.21 730.6 L 1139.21 759.0 M 1142.33 730.6 L 1142.33 759.0 M 1145.83 730.6 L 1145.83 759.0 M 1149.57 730.6 L 1149.57 759.0 M 1153.23 730.6 L 1153.23 759.0 M 1157.33 730.6 L 1157.33 759.0 L 1160.33 759.0 M 1160.77 730.6 L 1160.77 759.0 M 1164.66 730.6 L 1164.66 759.0 M 1167.92 730.6 L 1167.92 759.0 M 1171.99 730.6 L 1171.99 759.0 M 1175.77 730.6 L 1175.77 759.0 M 1179.02 730.6 L 1179.02 759.0 L 1182.02 759.0 M 1183.00 730.6 L 1183.00 759.0 M 1186.28 730.6 L 1186.28 759.0 M 1189.65 730.6 L 1189.65 759.0 L 1192.65 759.0 M 1193.03 730.6 L 1193.03 759.0 L 1196.03 759.0 M 1196.53 730.6 L 1196.53 759.0 M 1200.08 730.6 L 1200.08 759.0 M 1203.18 730.6 L 1203.18 759.0 L 1206.18 759.0 M 1206.40 730.6 L 1206.40 759.0 M 1209.67 730.6 L 1209.67 759.0 M 1213.30 730.6 L 1213.30 759.0 M 1217.27 730.6 L 1217.27 759.0 M 1221.33 730.6 L 1221.33 759.0 L 1224.33 759.0 M 1224.80 730.6 L 1224.80 759.0 M 1228.28 730.6 L 1228.28 759.0 L 1231.28 759.0 M 1231.86 730.6 L 1231.86 759.0 L 1234.86 759.0 M 1235.84 730.6 L 1235.84 759.0 M 1239.00 730.6 L 1239.00 759.0 M 1242.63 730.6 L 1242.63 759.0 L 1245.63 759.0 M 1246.35 730.6 L 1246.35 759.0 M 1249.78 730.6 L 1249.78 759.0 L 1252.78 759.0 M 1253.05 730.6 L 1253.05 759.0 L 1256.05 759.0 M 1256.69 730.6 L 1256.69 759.0 M 1260.67 730.6 L 1260.67 759.0 L 1263.67 759.0 M 1263.74 730.6 L 1263.74 759.0 M 1266.94 730.6 L 1266.94 759.0 M 1270.24 730.6 L 1270.24 759.0 L 1273.24 759.0 M 1273.99 730.6 L 1273.99 759.0 M 1277.45 730.6 L 1277.45 759.0 M 1280.85 730.6 L 1280.85 759.0 M 1284.51 730.6 L 1284.51 759.0 L 1287.51 759.0 M 1288.37 730.6 L 1288.37 759.0 L 1291.37 759.0 M 1291.48 730.6 L 1291.48 759.0 L 1294.48 759.0 M 1295.45 730.6 L 1295.45 759.0 M 1298.90 730.6 L 1298.90 759.0 M 1302.72 730.6 L 1302.72 759.0 L 1305.72 759.0 M 1306.54 730.6 L 1306.54 759.0 M 1310.62 730.6 L 1310.62 759.0 L 1313.62 759.0 M 1314.30 730.6 L 1314.30 759.0 M 1318.27 730.6 L 1318.27 759.0" fill="none" stroke="#6aa84f" stroke-width="1.3" />
<rect x="1318.2" y="737" width="3.6" height="17.7" rx="0" fill="#222" />
<line x1="1320" y1="730" x2="1320" y2="771" stroke="#555" stroke-width="1" />
<line x1="492.5" y1="774.2" x2="1322" y2="774.2" stroke="#7a7a7a" stroke-width="2" />
<line x1="493.5" y1="773" x2="493.5" y2="777.2" stroke="#7a7a7a" stroke-width="1.4" />
<line x1="1321.2" y1="773" x2="1321.2" y2="777.2" stroke="#7a7a7a" stroke-width="1.4" />
<line x1="540.3" y1="773" x2="540.3" y2="777.2" stroke="#7a7a7a" stroke-width="1.4" />
<text x="540.3" y="787.4" font-size="10.50" fill="#333" text-anchor="middle" >Sep</text>
<line x1="675.2" y1="773" x2="675.2" y2="777.2" stroke="#7a7a7a" stroke-width="1.4" />
<text x="675.2" y="787.4" font-size="10.50" fill="#333" text-anchor="middle" >Oct</text>
<line x1="814.7" y1="773" x2="814.7" y2="777.2" stroke="#7a7a7a" stroke-width="1.4" />
<text x="814.7" y="787.4" font-size="10.50" fill="#333" text-anchor="middle" >Nov</text>
<line x1="949.8" y1="773" x2="949.8" y2="777.2" stroke="#7a7a7a" stroke-width="1.4" />
<text x="949.8" y="787.4" font-size="10.50" fill="#333" text-anchor="middle" >Dec</text>
<line x1="1089.5" y1="773" x2="1089.5" y2="777.2" stroke="#7a7a7a" stroke-width="1.4" />
<text x="1089.5" y="787.4" font-size="10.50" fill="#333" text-anchor="middle" >2022</text>
<line x1="1228.8" y1="773" x2="1228.8" y2="777.2" stroke="#7a7a7a" stroke-width="1.4" />
<text x="1228.8" y="787.4" font-size="10.50" fill="#333" text-anchor="middle" >Feb</text>
<rect x="493.8" y="798.8" width="242.7" height="21.800000000000068" rx="3" fill="#fff" stroke="#dcdcdc" stroke-width="1" />
<rect x="633.8" y="798.8" width="34.5" height="21.8" rx="0" fill="#eef4fa" />
<line x1="526.3" y1="798.8" x2="526.3" y2="820.6" stroke="#e2e2e2" stroke-width="1" />
<line x1="563" y1="798.8" x2="563" y2="820.6" stroke="#e2e2e2" stroke-width="1" />
<line x1="598" y1="798.8" x2="598" y2="820.6" stroke="#e2e2e2" stroke-width="1" />
<line x1="633.2" y1="798.8" x2="633.2" y2="820.6" stroke="#e2e2e2" stroke-width="1" />
<line x1="668.7" y1="798.8" x2="668.7" y2="820.6" stroke="#e2e2e2" stroke-width="1" />
<line x1="700.4" y1="798.8" x2="700.4" y2="820.6" stroke="#e2e2e2" stroke-width="1" />
<text x="502.0" y="814.8" font-size="12.29" fill="#333" textLength="16.0" lengthAdjust="spacingAndGlyphs" text-anchor="start" >1D</text>
<text x="535.4" y="814.8" font-size="12.29" fill="#333" textLength="18.5" lengthAdjust="spacingAndGlyphs" text-anchor="start" >1W</text>
<text x="571.8" y="814.8" font-size="12.29" fill="#333" textLength="17.3" lengthAdjust="spacingAndGlyphs" text-anchor="start" >1M</text>
<text x="606.2" y="814.8" font-size="12.29" fill="#333" textLength="17.9" lengthAdjust="spacingAndGlyphs" text-anchor="start" >3M</text>
<text x="642.0" y="814.8" font-size="12.29" fill="#2f6fc4" textLength="17.4" lengthAdjust="spacingAndGlyphs" text-anchor="start" >6M</text>
<text x="677.0" y="814.8" font-size="12.29" fill="#333" textLength="14.0" lengthAdjust="spacingAndGlyphs" text-anchor="start" >1Y</text>
<text x="708.7" y="814.8" font-size="12.29" fill="#333" textLength="19.5" lengthAdjust="spacingAndGlyphs" text-anchor="start" >ALL</text>
<rect x="754.6" y="798.8" width="102.29999999999995" height="21.800000000000068" rx="3" fill="#fff" stroke="#dcdcdc" stroke-width="1" />
<line x1="834.3" y1="798.8" x2="834.3" y2="820.6" stroke="#e2e2e2" stroke-width="1" />
<text x="762.7" y="814.8" font-size="12.29" fill="#333" textLength="50.1" lengthAdjust="spacingAndGlyphs" text-anchor="start" >CUSTOM</text>
<path d="M 819.7 813 L 827.4 813 L 823.55 808.6 Z" fill="#999" />
<rect x="840.9" y="806.9" width="10.2" height="8.2" rx="1" fill="none" stroke="#777" stroke-width="1.1" />
<path d="M 843 809.5 V 808.8 H 844 M 849 809.5 V 808.8 H 848 M 843 812.5 V 813.2 H 844 M 849 812.5 V 813.2 H 848" fill="none" stroke="#777" stroke-width="0.9" />
<rect x="1290.5" y="134.5" width="32" height="32" rx="2" fill="#0f5cbf" />
<path d="M 1314.90 150.50 L 1314.74 152.14 L 1312.23 152.87 L 1311.66 153.94 L 1312.44 156.44 L 1311.17 157.48 L 1308.87 156.23 L 1307.71 156.58 L 1306.50 158.90 L 1304.86 158.74 L 1304.13 156.23 L 1303.06 155.66 L 1300.56 156.44 L 1299.52 155.17 L 1300.77 152.87 L 1300.42 151.71 L 1298.10 150.50 L 1298.26 148.86 L 1300.77 148.13 L 1301.34 147.06 L 1300.56 144.56 L 1301.83 143.52 L 1304.13 144.77 L 1305.29 144.42 L 1306.50 142.10 L 1308.14 142.26 L 1308.87 144.77 L 1309.94 145.34 L 1312.44 144.56 L 1313.48 145.83 L 1312.23 148.13 L 1312.58 149.29 Z" fill="#fff" />
<circle cx="1306.5" cy="150.5" r="2.6" fill="#0f5cbf" />
<filter id="tsh" x="-20%" y="-20%" width="140%" height="160%"><feDropShadow dx="0" dy="2" stdDeviation="2.2" flood-color="#000" flood-opacity="0.13"/></filter>
<path d="M 388.6 221.3 H 400.7 L 406 215.1 L 412.2 221.3 H 467.4 Q 470.4 221.3 470.4 224.3 V 258.3 Q 470.4 261.3 467.4 261.3 H 388.6 Q 385.6 261.3 385.6 258.3 V 224.3 Q 385.6 221.3 388.6 221.3 Z" fill="#fff" stroke="#ececec" stroke-width="0.8" filter="url(#tsh)"/>
<text x="401.6" y="246.7" font-size="13.69" fill="#2e3133" textLength="52.8" lengthAdjust="spacingAndGlyphs" text-anchor="start" >Ungroup</text>
<line x1="100.1" y1="167.9" x2="468" y2="167.9" stroke="#7000ff" stroke-width="2" stroke-linecap="square" stroke-dasharray="9.997 5.998" stroke-dashoffset="4.999"/>
<line x1="468" y1="167.9" x2="468" y2="392.9" stroke="#7000ff" stroke-width="2" stroke-linecap="square" stroke-dasharray="10.045 6.027" stroke-dashoffset="5.022"/>
<line x1="468" y1="392.9" x2="100.1" y2="392.9" stroke="#7000ff" stroke-width="2" stroke-linecap="square" stroke-dasharray="9.997 5.998" stroke-dashoffset="4.999"/>
<line x1="100.1" y1="392.9" x2="100.1" y2="167.9" stroke="#7000ff" stroke-width="2" stroke-linecap="square" stroke-dasharray="10.045 6.027" stroke-dashoffset="5.022"/>
<line x1="488.7" y1="139" x2="678.6" y2="139" stroke="#7000ff" stroke-width="2" stroke-linecap="square" stroke-dasharray="9.891 5.934" stroke-dashoffset="4.945"/>
<line x1="678.6" y1="139" x2="678.6" y2="168.6" stroke="#7000ff" stroke-width="2" stroke-linecap="square" stroke-dasharray="9.250 5.550" stroke-dashoffset="4.625"/>
<line x1="678.6" y1="168.6" x2="488.7" y2="168.6" stroke="#7000ff" stroke-width="2" stroke-linecap="square" stroke-dasharray="9.891 5.934" stroke-dashoffset="4.945"/>
<line x1="488.7" y1="168.6" x2="488.7" y2="139" stroke="#7000ff" stroke-width="2" stroke-linecap="square" stroke-dasharray="9.250 5.550" stroke-dashoffset="4.625"/>
<rect x="275.3" y="73" width="147.7" height="31.9" rx="5" fill="#7000ff" />
<text x="301.7" y="94.8" font-size="15.78" fill="#fff" font-weight="700" textLength="94.8" lengthAdjust="spacingAndGlyphs" text-anchor="start" >Grouped tags</text>
<path d="M 348.7 107.3 L 329.8 159.2 M 325.2 150.4 L 329.8 159.2 L 339.1 154.8" fill="none" stroke="#7000ff" stroke-width="2" stroke-linejoin="miter" stroke-linecap="butt"/>
<path d="M 422.6 104.9 L 480.2 137.3 M 477.4 128.7 L 480.2 137.3 L 470.4 140" fill="none" stroke="#7000ff" stroke-width="2" stroke-linejoin="miter" stroke-linecap="butt"/>
</g>
</svg>
</body></html>
